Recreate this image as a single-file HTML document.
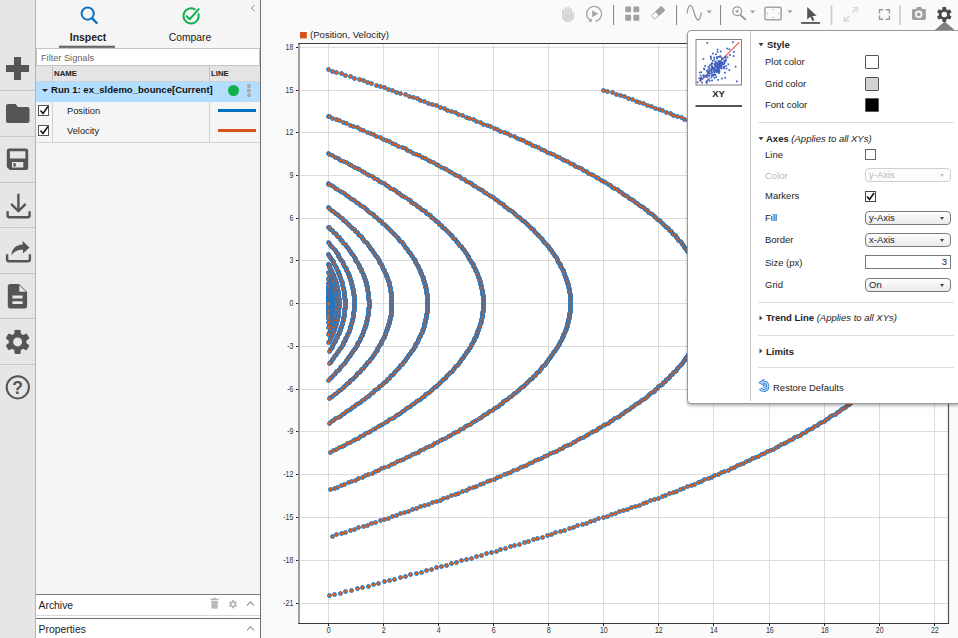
<!DOCTYPE html>
<html><head><meta charset="utf-8"><title>Simulation Data Inspector</title>
<style>
*{box-sizing:border-box;margin:0;padding:0}
html,body{width:958px;height:638px;overflow:hidden;background:#fafafa;font-family:"Liberation Sans",Arial,sans-serif;color:#1a1a1a}
.abs{position:absolute}
#strip{left:0;top:0;width:35px;height:638px;background:#e6e6e6}
#stripb{left:35px;top:0;width:1px;height:638px;background:#b4b4b4}
.sep{left:0;width:35px;height:1px;background:#c8c8c8}
#panel{left:36px;top:0;width:224px;height:638px;background:#f5f5f5}
#panelb{left:260px;top:0;width:1px;height:638px;background:#6e6e6e}
#gap{left:261px;top:0;width:3px;height:638px;background:linear-gradient(90deg,#fff 0,#fff 33%,#f5f5f5 33%,#f7f7f7 100%)}
.tab{font-size:10.4px;text-align:center;width:80px;top:32.2px;line-height:12px;color:#222}
#filter{left:36px;top:48px;width:224px;height:18px;background:#fff;border:1px solid #c4c4c4;font-size:9.2px;color:#666;padding-left:4px;line-height:18.6px}
#thead{left:36px;top:66px;width:224px;height:16px;background:#e4e4e4;border-bottom:1px solid #cbd3da;font-size:7.8px;font-weight:bold;color:#222;line-height:16px}
#run{left:36px;top:82px;width:224px;height:20px;background:#b3deff;font-size:9.55px;font-weight:bold;line-height:16px;color:#111}
.row{left:36px;width:224px;height:20px;background:#f5f5f5;font-size:9.3px;line-height:19px;color:#222}
.cb{width:11px;height:11px;border:1px solid #555;background:#fff}
.vline{width:1px;background:#d0d0d0}
#archive,#props{left:38.5px;font-size:10.4px;line-height:12px;color:#222;white-space:nowrap}
#pop{left:687px;top:30px;width:274px;height:374px;background:#fff;border:1px solid #999;border-radius:4px;box-shadow:0 2px 3px rgba(0,0,0,.28)}
.lbl{font-size:9.5px;color:#222;left:765px;line-height:12px;white-space:nowrap}
.hd{font-size:9.5px;color:#222;left:766px;line-height:12px;white-space:nowrap}
.hline{left:758px;width:196px;height:1px;background:#dcdcdc}
.sw{left:865px;width:14px;height:14px;border:1px solid #555;border-radius:1px}
.sel{left:865px;width:86px;height:14px;border:1px solid #7a7a7a;border-radius:4px;background:linear-gradient(#fff,#e9e9e9);font-size:9.5px;line-height:11px;padding-left:3px;color:#222}
.tri{width:0;height:0;border-left:3.5px solid transparent;border-right:3.5px solid transparent;border-top:4px solid #555}
.tri2{width:0;height:0;border-left:2.6px solid transparent;border-right:2.6px solid transparent;border-top:3px solid #444}
svg{position:absolute;left:0;top:0}
</style></head><body>
<!-- PLOT -->
<svg width="958" height="638" viewBox="0 0 958 638">
<rect x="298.5" y="43.5" width="650" height="580" fill="#fff"/>
<g stroke="#dcdcdc" stroke-width="1" shape-rendering="crispEdges">
<path d="M328.5 44V623"/>
<path d="M383.5 44V623"/>
<path d="M438.5 44V623"/>
<path d="M493.5 44V623"/>
<path d="M548.5 44V623"/>
<path d="M603.5 44V623"/>
<path d="M658.5 44V623"/>
<path d="M713.5 44V623"/>
<path d="M769.5 44V623"/>
<path d="M824.5 44V623"/>
<path d="M879.5 44V623"/>
<path d="M934.5 44V623"/>
<path d="M299 603.5H948"/>
<path d="M299 560.5H948"/>
<path d="M299 517.5H948"/>
<path d="M299 474.5H948"/>
<path d="M299 431.5H948"/>
<path d="M299 389.5H948"/>
<path d="M299 346.5H948"/>
<path d="M299 303.5H948"/>
<path d="M299 260.5H948"/>
<path d="M299 218.5H948"/>
<path d="M299 175.5H948"/>
<path d="M299 132.5H948"/>
<path d="M299 90.5H948"/>
<path d="M299 47.5H948"/>
</g>
<path d="M299 43V624" stroke="#777" stroke-width="1.4"/><path d="M948.5 43V624" stroke="#555" stroke-width="1.2"/><path d="M298.300 43.500H949M298.300 623.500H949" stroke="#3a3a3a" stroke-width="1.1"/>
<g stroke="#222" stroke-width="1" shape-rendering="crispEdges">
<path d="M328.5 624v2"/>
<path d="M383.5 624v2"/>
<path d="M438.5 624v2"/>
<path d="M493.5 624v2"/>
<path d="M548.5 624v2"/>
<path d="M603.5 624v2"/>
<path d="M658.5 624v2"/>
<path d="M713.5 624v2"/>
<path d="M769.5 624v2"/>
<path d="M824.5 624v2"/>
<path d="M879.5 624v2"/>
<path d="M934.5 624v2"/>
<path d="M296.300 603.5h2"/>
<path d="M296.300 560.5h2"/>
<path d="M296.300 517.5h2"/>
<path d="M296.300 474.5h2"/>
<path d="M296.300 431.5h2"/>
<path d="M296.300 389.5h2"/>
<path d="M296.300 346.5h2"/>
<path d="M296.300 303.5h2"/>
<path d="M296.300 260.5h2"/>
<path d="M296.300 218.5h2"/>
<path d="M296.300 175.5h2"/>
<path d="M296.300 132.5h2"/>
<path d="M296.300 90.5h2"/>
<path d="M296.300 47.5h2"/>
</g>
<g font-family="Liberation Sans, Arial, sans-serif" font-size="8.2" fill="#333" transform="scale(.86 1)">
<text x="382.33" y="633.200" text-anchor="middle">0</text>
<text x="446.28" y="633.200" text-anchor="middle">2</text>
<text x="510.23" y="633.200" text-anchor="middle">4</text>
<text x="574.19" y="633.200" text-anchor="middle">6</text>
<text x="638.14" y="633.200" text-anchor="middle">8</text>
<text x="702.09" y="633.200" text-anchor="middle">10</text>
<text x="766.05" y="633.200" text-anchor="middle">12</text>
<text x="830.00" y="633.200" text-anchor="middle">14</text>
<text x="895.12" y="633.200" text-anchor="middle">16</text>
<text x="959.07" y="633.200" text-anchor="middle">18</text>
<text x="1023.02" y="633.200" text-anchor="middle">20</text>
<text x="1086.98" y="633.200" text-anchor="middle">22</text>
<text x="341.16" y="606.0" text-anchor="end">-21</text>
<text x="341.16" y="563.0" text-anchor="end">-18</text>
<text x="341.16" y="520.0" text-anchor="end">-15</text>
<text x="341.16" y="477.0" text-anchor="end">-12</text>
<text x="341.16" y="434.0" text-anchor="end">-9</text>
<text x="341.16" y="392.0" text-anchor="end">-6</text>
<text x="341.16" y="349.0" text-anchor="end">-3</text>
<text x="341.16" y="306.0" text-anchor="end">0</text>
<text x="341.16" y="263.0" text-anchor="end">3</text>
<text x="341.16" y="221.0" text-anchor="end">6</text>
<text x="341.16" y="178.0" text-anchor="end">9</text>
<text x="341.16" y="135.0" text-anchor="end">12</text>
<text x="341.16" y="93.0" text-anchor="end">15</text>
<text x="341.16" y="50.0" text-anchor="end">18</text>
</g>
<rect x="300" y="32" width="6.800" height="6.400" fill="#d95319"/>
<text x="310" y="37.600" font-family="Liberation Sans, Arial, sans-serif" font-size="9.6" fill="#222">(Position, Velocity)</text>
<g fill="#ee5a0c" stroke="#0a78d6" stroke-width="0.9">
<circle cx="603.5" cy="90.5" r="2"/>
<circle cx="607.5" cy="91.5" r="2"/>
<circle cx="612.5" cy="92.5" r="2"/>
<circle cx="616.5" cy="94.5" r="2"/>
<circle cx="620.5" cy="95.5" r="2"/>
<circle cx="624.5" cy="96.5" r="2"/>
<circle cx="628.5" cy="98.5" r="2"/>
<circle cx="632.5" cy="99.5" r="2"/>
<circle cx="636.5" cy="101.5" r="2"/>
<circle cx="639.5" cy="102.5" r="2"/>
<circle cx="643.5" cy="103.5" r="2"/>
<circle cx="647.5" cy="105.5" r="2"/>
<circle cx="651.5" cy="106.5" r="2"/>
<circle cx="655.5" cy="108.5" r="2"/>
<circle cx="659.5" cy="109.5" r="2"/>
<circle cx="662.5" cy="110.5" r="2"/>
<circle cx="666.5" cy="112.5" r="2"/>
<circle cx="670.5" cy="113.5" r="2"/>
<circle cx="673.5" cy="115.5" r="2"/>
<circle cx="677.5" cy="116.5" r="2"/>
<circle cx="681.5" cy="117.5" r="2"/>
<circle cx="684.5" cy="119.5" r="2"/>
<circle cx="688.5" cy="120.5" r="2"/>
<circle cx="691.5" cy="122.5" r="2"/>
<circle cx="695.5" cy="123.5" r="2"/>
<circle cx="698.5" cy="124.5" r="2"/>
<circle cx="702.5" cy="126.5" r="2"/>
<circle cx="705.5" cy="127.5" r="2"/>
<circle cx="708.5" cy="129.5" r="2"/>
<circle cx="712.5" cy="130.5" r="2"/>
<circle cx="715.5" cy="131.5" r="2"/>
<circle cx="718.5" cy="133.5" r="2"/>
<circle cx="722.5" cy="134.5" r="2"/>
<circle cx="725.5" cy="136.5" r="2"/>
<circle cx="728.5" cy="137.5" r="2"/>
<circle cx="731.5" cy="138.5" r="2"/>
<circle cx="735.5" cy="140.5" r="2"/>
<circle cx="738.5" cy="141.5" r="2"/>
<circle cx="741.5" cy="143.5" r="2"/>
<circle cx="744.5" cy="144.5" r="2"/>
<circle cx="747.5" cy="145.5" r="2"/>
<circle cx="750.5" cy="147.5" r="2"/>
<circle cx="753.5" cy="148.5" r="2"/>
<circle cx="756.5" cy="150.5" r="2"/>
<circle cx="759.5" cy="151.5" r="2"/>
<circle cx="762.5" cy="152.5" r="2"/>
<circle cx="765.5" cy="154.5" r="2"/>
<circle cx="768.5" cy="155.5" r="2"/>
<circle cx="770.5" cy="157.5" r="2"/>
<circle cx="773.5" cy="158.5" r="2"/>
<circle cx="776.5" cy="159.5" r="2"/>
<circle cx="779.5" cy="161.5" r="2"/>
<circle cx="782.5" cy="162.5" r="2"/>
<circle cx="784.5" cy="164.5" r="2"/>
<circle cx="787.5" cy="165.5" r="2"/>
<circle cx="790.5" cy="166.5" r="2"/>
<circle cx="792.5" cy="168.5" r="2"/>
<circle cx="795.5" cy="169.5" r="2"/>
<circle cx="797.5" cy="171.5" r="2"/>
<circle cx="800.5" cy="172.5" r="2"/>
<circle cx="803.5" cy="173.5" r="2"/>
<circle cx="805.5" cy="175.5" r="2"/>
<circle cx="808.5" cy="176.5" r="2"/>
<circle cx="810.5" cy="178.5" r="2"/>
<circle cx="812.5" cy="179.5" r="2"/>
<circle cx="815.5" cy="180.5" r="2"/>
<circle cx="817.5" cy="182.5" r="2"/>
<circle cx="819.5" cy="183.5" r="2"/>
<circle cx="822.5" cy="185.5" r="2"/>
<circle cx="824.5" cy="186.5" r="2"/>
<circle cx="826.5" cy="187.5" r="2"/>
<circle cx="829.5" cy="189.5" r="2"/>
<circle cx="831.5" cy="190.5" r="2"/>
<circle cx="833.5" cy="192.5" r="2"/>
<circle cx="835.5" cy="193.5" r="2"/>
<circle cx="837.5" cy="194.5" r="2"/>
<circle cx="839.5" cy="196.5" r="2"/>
<circle cx="841.5" cy="197.5" r="2"/>
<circle cx="843.5" cy="198.5" r="2"/>
<circle cx="845.5" cy="200.5" r="2"/>
<circle cx="847.5" cy="201.5" r="2"/>
<circle cx="849.5" cy="203.5" r="2"/>
<circle cx="851.5" cy="204.5" r="2"/>
<circle cx="853.5" cy="205.5" r="2"/>
<circle cx="855.5" cy="207.5" r="2"/>
<circle cx="857.5" cy="208.5" r="2"/>
<circle cx="859.5" cy="210.5" r="2"/>
<circle cx="860.5" cy="211.5" r="2"/>
<circle cx="862.5" cy="212.5" r="2"/>
<circle cx="864.5" cy="214.5" r="2"/>
<circle cx="866.5" cy="215.5" r="2"/>
<circle cx="867.5" cy="217.5" r="2"/>
<circle cx="869.5" cy="218.5" r="2"/>
<circle cx="871.5" cy="219.5" r="2"/>
<circle cx="872.5" cy="221.5" r="2"/>
<circle cx="874.5" cy="222.5" r="2"/>
<circle cx="875.5" cy="224.5" r="2"/>
<circle cx="877.5" cy="225.5" r="2"/>
<circle cx="878.5" cy="226.5" r="2"/>
<circle cx="880.5" cy="228.5" r="2"/>
<circle cx="881.5" cy="229.5" r="2"/>
<circle cx="883.5" cy="231.5" r="2"/>
<circle cx="884.5" cy="232.5" r="2"/>
<circle cx="885.5" cy="233.5" r="2"/>
<circle cx="887.5" cy="235.5" r="2"/>
<circle cx="888.5" cy="236.5" r="2"/>
<circle cx="889.5" cy="238.5" r="2"/>
<circle cx="891.5" cy="239.5" r="2"/>
<circle cx="892.5" cy="240.5" r="2"/>
<circle cx="893.5" cy="242.5" r="2"/>
<circle cx="894.5" cy="243.5" r="2"/>
<circle cx="895.5" cy="245.5" r="2"/>
<circle cx="897.5" cy="246.5" r="2"/>
<circle cx="898.5" cy="247.5" r="2"/>
<circle cx="899.5" cy="249.5" r="2"/>
<circle cx="900.5" cy="250.5" r="2"/>
<circle cx="901.5" cy="252.5" r="2"/>
<circle cx="902.5" cy="253.5" r="2"/>
<circle cx="903.5" cy="254.5" r="2"/>
<circle cx="904.5" cy="256.5" r="2"/>
<circle cx="904.5" cy="257.5" r="2"/>
<circle cx="905.5" cy="259.5" r="2"/>
<circle cx="906.5" cy="260.5" r="2"/>
<circle cx="907.5" cy="261.5" r="2"/>
<circle cx="908.5" cy="263.5" r="2"/>
<circle cx="909.5" cy="264.5" r="2"/>
<circle cx="909.5" cy="266.5" r="2"/>
<circle cx="910.5" cy="267.5" r="2"/>
<circle cx="911.5" cy="268.5" r="2"/>
<circle cx="911.5" cy="270.5" r="2"/>
<circle cx="912.5" cy="271.5" r="2"/>
<circle cx="913.5" cy="273.5" r="2"/>
<circle cx="913.5" cy="274.5" r="2"/>
<circle cx="914.5" cy="275.5" r="2"/>
<circle cx="914.5" cy="277.5" r="2"/>
<circle cx="915.5" cy="278.5" r="2"/>
<circle cx="915.5" cy="280.5" r="2"/>
<circle cx="916.5" cy="281.5" r="2"/>
<circle cx="916.5" cy="282.5" r="2"/>
<circle cx="917.5" cy="284.5" r="2"/>
<circle cx="917.5" cy="285.5" r="2"/>
<circle cx="917.5" cy="287.5" r="2"/>
<circle cx="918.5" cy="288.5" r="2"/>
<circle cx="918.5" cy="289.5" r="2"/>
<circle cx="918.5" cy="291.5" r="2"/>
<circle cx="918.5" cy="292.5" r="2"/>
<circle cx="918.5" cy="294.5" r="2"/>
<circle cx="919.5" cy="295.5" r="2"/>
<circle cx="919.5" cy="296.5" r="2"/>
<circle cx="919.5" cy="298.5" r="2"/>
<circle cx="919.5" cy="299.5" r="2"/>
<circle cx="919.5" cy="300.5" r="2"/>
<circle cx="919.5" cy="302.5" r="2"/>
<circle cx="919.5" cy="303.5" r="2"/>
<circle cx="919.5" cy="305.5" r="2"/>
<circle cx="919.5" cy="306.5" r="2"/>
<circle cx="919.5" cy="307.5" r="2"/>
<circle cx="919.5" cy="309.5" r="2"/>
<circle cx="919.5" cy="310.5" r="2"/>
<circle cx="919.5" cy="312.5" r="2"/>
<circle cx="918.5" cy="313.5" r="2"/>
<circle cx="918.5" cy="314.5" r="2"/>
<circle cx="918.5" cy="316.5" r="2"/>
<circle cx="918.5" cy="317.5" r="2"/>
<circle cx="917.5" cy="319.5" r="2"/>
<circle cx="917.5" cy="320.5" r="2"/>
<circle cx="917.5" cy="321.5" r="2"/>
<circle cx="916.5" cy="323.5" r="2"/>
<circle cx="916.5" cy="324.5" r="2"/>
<circle cx="916.5" cy="326.5" r="2"/>
<circle cx="915.5" cy="327.5" r="2"/>
<circle cx="915.5" cy="328.5" r="2"/>
<circle cx="914.5" cy="330.5" r="2"/>
<circle cx="914.5" cy="331.5" r="2"/>
<circle cx="913.5" cy="333.5" r="2"/>
<circle cx="913.5" cy="334.5" r="2"/>
<circle cx="912.5" cy="335.5" r="2"/>
<circle cx="911.5" cy="337.5" r="2"/>
<circle cx="911.5" cy="338.5" r="2"/>
<circle cx="910.5" cy="340.5" r="2"/>
<circle cx="909.5" cy="341.5" r="2"/>
<circle cx="908.5" cy="342.5" r="2"/>
<circle cx="908.5" cy="344.5" r="2"/>
<circle cx="907.5" cy="345.5" r="2"/>
<circle cx="906.5" cy="347.5" r="2"/>
<circle cx="905.5" cy="348.5" r="2"/>
<circle cx="904.5" cy="349.5" r="2"/>
<circle cx="903.5" cy="351.5" r="2"/>
<circle cx="902.5" cy="352.5" r="2"/>
<circle cx="902.5" cy="354.5" r="2"/>
<circle cx="901.5" cy="355.5" r="2"/>
<circle cx="900.5" cy="356.5" r="2"/>
<circle cx="898.5" cy="358.5" r="2"/>
<circle cx="897.5" cy="359.5" r="2"/>
<circle cx="896.5" cy="361.5" r="2"/>
<circle cx="895.5" cy="362.5" r="2"/>
<circle cx="894.5" cy="363.5" r="2"/>
<circle cx="893.5" cy="365.5" r="2"/>
<circle cx="892.5" cy="366.5" r="2"/>
<circle cx="890.5" cy="368.5" r="2"/>
<circle cx="889.5" cy="369.5" r="2"/>
<circle cx="888.5" cy="370.5" r="2"/>
<circle cx="887.5" cy="372.5" r="2"/>
<circle cx="885.5" cy="373.5" r="2"/>
<circle cx="884.5" cy="375.5" r="2"/>
<circle cx="882.5" cy="376.5" r="2"/>
<circle cx="881.5" cy="377.5" r="2"/>
<circle cx="880.5" cy="379.5" r="2"/>
<circle cx="878.5" cy="380.5" r="2"/>
<circle cx="877.5" cy="382.5" r="2"/>
<circle cx="875.5" cy="383.5" r="2"/>
<circle cx="874.5" cy="384.5" r="2"/>
<circle cx="872.5" cy="386.5" r="2"/>
<circle cx="870.5" cy="387.5" r="2"/>
<circle cx="869.5" cy="389.5" r="2"/>
<circle cx="867.5" cy="390.5" r="2"/>
<circle cx="865.5" cy="391.5" r="2"/>
<circle cx="864.5" cy="393.5" r="2"/>
<circle cx="862.5" cy="394.5" r="2"/>
<circle cx="860.5" cy="396.5" r="2"/>
<circle cx="858.5" cy="397.5" r="2"/>
<circle cx="856.5" cy="398.5" r="2"/>
<circle cx="855.5" cy="400.5" r="2"/>
<circle cx="853.5" cy="401.5" r="2"/>
<circle cx="851.5" cy="402.5" r="2"/>
<circle cx="849.5" cy="404.5" r="2"/>
<circle cx="847.5" cy="405.5" r="2"/>
<circle cx="845.5" cy="407.5" r="2"/>
<circle cx="843.5" cy="408.5" r="2"/>
<circle cx="841.5" cy="409.5" r="2"/>
<circle cx="839.5" cy="411.5" r="2"/>
<circle cx="837.5" cy="412.5" r="2"/>
<circle cx="835.5" cy="414.5" r="2"/>
<circle cx="832.5" cy="415.5" r="2"/>
<circle cx="830.5" cy="416.5" r="2"/>
<circle cx="828.5" cy="418.5" r="2"/>
<circle cx="826.5" cy="419.5" r="2"/>
<circle cx="824.5" cy="421.5" r="2"/>
<circle cx="821.5" cy="422.5" r="2"/>
<circle cx="819.5" cy="423.5" r="2"/>
<circle cx="817.5" cy="425.5" r="2"/>
<circle cx="814.5" cy="426.5" r="2"/>
<circle cx="812.5" cy="428.5" r="2"/>
<circle cx="809.5" cy="429.5" r="2"/>
<circle cx="807.5" cy="430.5" r="2"/>
<circle cx="805.5" cy="432.5" r="2"/>
<circle cx="802.5" cy="433.5" r="2"/>
<circle cx="800.5" cy="435.5" r="2"/>
<circle cx="797.5" cy="436.5" r="2"/>
<circle cx="794.5" cy="437.5" r="2"/>
<circle cx="792.5" cy="439.5" r="2"/>
<circle cx="789.5" cy="440.5" r="2"/>
<circle cx="786.5" cy="442.5" r="2"/>
<circle cx="784.5" cy="443.5" r="2"/>
<circle cx="781.5" cy="444.5" r="2"/>
<circle cx="778.5" cy="446.5" r="2"/>
<circle cx="776.5" cy="447.5" r="2"/>
<circle cx="773.5" cy="449.5" r="2"/>
<circle cx="770.5" cy="450.5" r="2"/>
<circle cx="767.5" cy="451.5" r="2"/>
<circle cx="764.5" cy="453.5" r="2"/>
<circle cx="761.5" cy="454.5" r="2"/>
<circle cx="758.5" cy="456.5" r="2"/>
<circle cx="755.5" cy="457.5" r="2"/>
<circle cx="752.5" cy="458.5" r="2"/>
<circle cx="749.5" cy="460.5" r="2"/>
<circle cx="746.5" cy="461.5" r="2"/>
<circle cx="743.5" cy="463.5" r="2"/>
<circle cx="740.5" cy="464.5" r="2"/>
<circle cx="737.5" cy="465.5" r="2"/>
<circle cx="734.5" cy="467.5" r="2"/>
<circle cx="731.5" cy="468.5" r="2"/>
<circle cx="728.5" cy="470.5" r="2"/>
<circle cx="724.5" cy="471.5" r="2"/>
<circle cx="721.5" cy="472.5" r="2"/>
<circle cx="718.5" cy="474.5" r="2"/>
<circle cx="714.5" cy="475.5" r="2"/>
<circle cx="711.5" cy="477.5" r="2"/>
<circle cx="708.5" cy="478.5" r="2"/>
<circle cx="704.5" cy="479.5" r="2"/>
<circle cx="701.5" cy="481.5" r="2"/>
<circle cx="698.5" cy="482.5" r="2"/>
<circle cx="694.5" cy="484.5" r="2"/>
<circle cx="691.5" cy="485.5" r="2"/>
<circle cx="687.5" cy="486.5" r="2"/>
<circle cx="683.5" cy="488.5" r="2"/>
<circle cx="680.5" cy="489.5" r="2"/>
<circle cx="676.5" cy="491.5" r="2"/>
<circle cx="673.5" cy="492.5" r="2"/>
<circle cx="669.5" cy="493.5" r="2"/>
<circle cx="665.5" cy="495.5" r="2"/>
<circle cx="662.5" cy="496.5" r="2"/>
<circle cx="658.5" cy="498.5" r="2"/>
<circle cx="654.5" cy="499.5" r="2"/>
<circle cx="650.5" cy="500.5" r="2"/>
<circle cx="646.5" cy="502.5" r="2"/>
<circle cx="643.5" cy="503.5" r="2"/>
<circle cx="639.5" cy="505.5" r="2"/>
<circle cx="635.5" cy="506.5" r="2"/>
<circle cx="631.5" cy="507.5" r="2"/>
<circle cx="627.5" cy="509.5" r="2"/>
<circle cx="623.5" cy="510.5" r="2"/>
<circle cx="619.5" cy="511.5" r="2"/>
<circle cx="615.5" cy="513.5" r="2"/>
<circle cx="611.5" cy="514.5" r="2"/>
<circle cx="607.5" cy="516.5" r="2"/>
<circle cx="603.5" cy="517.5" r="2"/>
<circle cx="598.5" cy="518.5" r="2"/>
<circle cx="594.5" cy="520.5" r="2"/>
<circle cx="590.5" cy="521.5" r="2"/>
<circle cx="586.5" cy="523.5" r="2"/>
<circle cx="582.5" cy="524.5" r="2"/>
<circle cx="577.5" cy="525.5" r="2"/>
<circle cx="573.5" cy="527.5" r="2"/>
<circle cx="569.5" cy="528.5" r="2"/>
<circle cx="564.5" cy="530.5" r="2"/>
<circle cx="560.5" cy="531.5" r="2"/>
<circle cx="555.5" cy="532.5" r="2"/>
<circle cx="551.5" cy="534.5" r="2"/>
<circle cx="547.5" cy="535.5" r="2"/>
<circle cx="542.5" cy="537.5" r="2"/>
<circle cx="537.5" cy="538.5" r="2"/>
<circle cx="533.5" cy="539.5" r="2"/>
<circle cx="528.5" cy="541.5" r="2"/>
<circle cx="524.5" cy="542.5" r="2"/>
<circle cx="519.5" cy="544.5" r="2"/>
<circle cx="514.5" cy="545.5" r="2"/>
<circle cx="510.5" cy="546.5" r="2"/>
<circle cx="505.5" cy="548.5" r="2"/>
<circle cx="500.5" cy="549.5" r="2"/>
<circle cx="496.5" cy="551.5" r="2"/>
<circle cx="491.5" cy="552.5" r="2"/>
<circle cx="486.5" cy="553.5" r="2"/>
<circle cx="481.5" cy="555.5" r="2"/>
<circle cx="476.5" cy="556.5" r="2"/>
<circle cx="471.5" cy="558.5" r="2"/>
<circle cx="466.5" cy="559.5" r="2"/>
<circle cx="461.5" cy="560.5" r="2"/>
<circle cx="456.5" cy="562.5" r="2"/>
<circle cx="451.5" cy="563.5" r="2"/>
<circle cx="446.5" cy="565.5" r="2"/>
<circle cx="441.5" cy="566.5" r="2"/>
<circle cx="436.5" cy="567.5" r="2"/>
<circle cx="431.5" cy="569.5" r="2"/>
<circle cx="426.5" cy="570.5" r="2"/>
<circle cx="421.5" cy="572.5" r="2"/>
<circle cx="416.5" cy="573.5" r="2"/>
<circle cx="410.5" cy="574.5" r="2"/>
<circle cx="405.5" cy="576.5" r="2"/>
<circle cx="400.5" cy="577.5" r="2"/>
<circle cx="394.5" cy="579.5" r="2"/>
<circle cx="389.5" cy="580.5" r="2"/>
<circle cx="384.5" cy="581.5" r="2"/>
<circle cx="378.5" cy="583.5" r="2"/>
<circle cx="373.5" cy="584.5" r="2"/>
<circle cx="368.5" cy="586.5" r="2"/>
<circle cx="362.5" cy="587.5" r="2"/>
<circle cx="357.5" cy="588.5" r="2"/>
<circle cx="351.5" cy="590.5" r="2"/>
<circle cx="345.5" cy="591.5" r="2"/>
<circle cx="340.5" cy="593.5" r="2"/>
<circle cx="334.5" cy="594.5" r="2"/>
<circle cx="329.5" cy="595.5" r="2"/>
<circle cx="328.5" cy="69.5" r="2"/>
<circle cx="332.5" cy="71.5" r="2"/>
<circle cx="336.5" cy="72.5" r="2"/>
<circle cx="341.5" cy="73.5" r="2"/>
<circle cx="345.5" cy="75.5" r="2"/>
<circle cx="350.5" cy="76.5" r="2"/>
<circle cx="354.5" cy="78.5" r="2"/>
<circle cx="359.5" cy="79.5" r="2"/>
<circle cx="363.5" cy="80.5" r="2"/>
<circle cx="367.5" cy="82.5" r="2"/>
<circle cx="371.5" cy="83.5" r="2"/>
<circle cx="376.5" cy="85.5" r="2"/>
<circle cx="380.5" cy="86.5" r="2"/>
<circle cx="384.5" cy="87.5" r="2"/>
<circle cx="388.5" cy="89.5" r="2"/>
<circle cx="392.5" cy="90.5" r="2"/>
<circle cx="396.5" cy="92.5" r="2"/>
<circle cx="400.5" cy="93.5" r="2"/>
<circle cx="405.5" cy="94.5" r="2"/>
<circle cx="409.5" cy="96.5" r="2"/>
<circle cx="413.5" cy="97.5" r="2"/>
<circle cx="417.5" cy="98.5" r="2"/>
<circle cx="420.5" cy="100.5" r="2"/>
<circle cx="424.5" cy="101.5" r="2"/>
<circle cx="428.5" cy="103.5" r="2"/>
<circle cx="432.5" cy="104.5" r="2"/>
<circle cx="436.5" cy="105.5" r="2"/>
<circle cx="440.5" cy="107.5" r="2"/>
<circle cx="444.5" cy="108.5" r="2"/>
<circle cx="447.5" cy="110.5" r="2"/>
<circle cx="451.5" cy="111.5" r="2"/>
<circle cx="455.5" cy="112.5" r="2"/>
<circle cx="458.5" cy="114.5" r="2"/>
<circle cx="462.5" cy="115.5" r="2"/>
<circle cx="466.5" cy="117.5" r="2"/>
<circle cx="469.5" cy="118.5" r="2"/>
<circle cx="473.5" cy="119.5" r="2"/>
<circle cx="476.5" cy="121.5" r="2"/>
<circle cx="480.5" cy="122.5" r="2"/>
<circle cx="483.5" cy="124.5" r="2"/>
<circle cx="487.5" cy="125.5" r="2"/>
<circle cx="490.5" cy="126.5" r="2"/>
<circle cx="494.5" cy="128.5" r="2"/>
<circle cx="497.5" cy="129.5" r="2"/>
<circle cx="500.5" cy="131.5" r="2"/>
<circle cx="504.5" cy="132.5" r="2"/>
<circle cx="507.5" cy="133.5" r="2"/>
<circle cx="510.5" cy="135.5" r="2"/>
<circle cx="514.5" cy="136.5" r="2"/>
<circle cx="517.5" cy="138.5" r="2"/>
<circle cx="520.5" cy="139.5" r="2"/>
<circle cx="523.5" cy="140.5" r="2"/>
<circle cx="526.5" cy="142.5" r="2"/>
<circle cx="529.5" cy="143.5" r="2"/>
<circle cx="532.5" cy="145.5" r="2"/>
<circle cx="535.5" cy="146.5" r="2"/>
<circle cx="538.5" cy="147.5" r="2"/>
<circle cx="541.5" cy="149.5" r="2"/>
<circle cx="544.5" cy="150.5" r="2"/>
<circle cx="547.5" cy="152.5" r="2"/>
<circle cx="550.5" cy="153.5" r="2"/>
<circle cx="553.5" cy="154.5" r="2"/>
<circle cx="556.5" cy="156.5" r="2"/>
<circle cx="559.5" cy="157.5" r="2"/>
<circle cx="562.5" cy="159.5" r="2"/>
<circle cx="564.5" cy="160.5" r="2"/>
<circle cx="567.5" cy="161.5" r="2"/>
<circle cx="570.5" cy="163.5" r="2"/>
<circle cx="573.5" cy="164.5" r="2"/>
<circle cx="575.5" cy="166.5" r="2"/>
<circle cx="578.5" cy="167.5" r="2"/>
<circle cx="581.5" cy="168.5" r="2"/>
<circle cx="583.5" cy="170.5" r="2"/>
<circle cx="586.5" cy="171.5" r="2"/>
<circle cx="588.5" cy="173.5" r="2"/>
<circle cx="591.5" cy="174.5" r="2"/>
<circle cx="593.5" cy="175.5" r="2"/>
<circle cx="596.5" cy="177.5" r="2"/>
<circle cx="598.5" cy="178.5" r="2"/>
<circle cx="601.5" cy="180.5" r="2"/>
<circle cx="603.5" cy="181.5" r="2"/>
<circle cx="605.5" cy="182.5" r="2"/>
<circle cx="608.5" cy="184.5" r="2"/>
<circle cx="610.5" cy="185.5" r="2"/>
<circle cx="612.5" cy="187.5" r="2"/>
<circle cx="614.5" cy="188.5" r="2"/>
<circle cx="617.5" cy="189.5" r="2"/>
<circle cx="619.5" cy="191.5" r="2"/>
<circle cx="621.5" cy="192.5" r="2"/>
<circle cx="623.5" cy="194.5" r="2"/>
<circle cx="625.5" cy="195.5" r="2"/>
<circle cx="627.5" cy="196.5" r="2"/>
<circle cx="629.5" cy="198.5" r="2"/>
<circle cx="631.5" cy="199.5" r="2"/>
<circle cx="633.5" cy="200.5" r="2"/>
<circle cx="635.5" cy="202.5" r="2"/>
<circle cx="637.5" cy="203.5" r="2"/>
<circle cx="639.5" cy="205.5" r="2"/>
<circle cx="641.5" cy="206.5" r="2"/>
<circle cx="643.5" cy="207.5" r="2"/>
<circle cx="645.5" cy="209.5" r="2"/>
<circle cx="647.5" cy="210.5" r="2"/>
<circle cx="648.5" cy="212.5" r="2"/>
<circle cx="650.5" cy="213.5" r="2"/>
<circle cx="652.5" cy="214.5" r="2"/>
<circle cx="654.5" cy="216.5" r="2"/>
<circle cx="655.5" cy="217.5" r="2"/>
<circle cx="657.5" cy="219.5" r="2"/>
<circle cx="659.5" cy="220.5" r="2"/>
<circle cx="660.5" cy="221.5" r="2"/>
<circle cx="662.5" cy="223.5" r="2"/>
<circle cx="663.5" cy="224.5" r="2"/>
<circle cx="665.5" cy="226.5" r="2"/>
<circle cx="666.5" cy="227.5" r="2"/>
<circle cx="668.5" cy="228.5" r="2"/>
<circle cx="669.5" cy="230.5" r="2"/>
<circle cx="671.5" cy="231.5" r="2"/>
<circle cx="672.5" cy="233.5" r="2"/>
<circle cx="673.5" cy="234.5" r="2"/>
<circle cx="675.5" cy="235.5" r="2"/>
<circle cx="676.5" cy="237.5" r="2"/>
<circle cx="677.5" cy="238.5" r="2"/>
<circle cx="678.5" cy="240.5" r="2"/>
<circle cx="680.5" cy="241.5" r="2"/>
<circle cx="681.5" cy="242.5" r="2"/>
<circle cx="682.5" cy="244.5" r="2"/>
<circle cx="683.5" cy="245.5" r="2"/>
<circle cx="684.5" cy="247.5" r="2"/>
<circle cx="685.5" cy="248.5" r="2"/>
<circle cx="686.5" cy="249.5" r="2"/>
<circle cx="687.5" cy="251.5" r="2"/>
<circle cx="688.5" cy="252.5" r="2"/>
<circle cx="689.5" cy="254.5" r="2"/>
<circle cx="690.5" cy="255.5" r="2"/>
<circle cx="691.5" cy="256.5" r="2"/>
<circle cx="692.5" cy="258.5" r="2"/>
<circle cx="693.5" cy="259.5" r="2"/>
<circle cx="694.5" cy="261.5" r="2"/>
<circle cx="695.5" cy="262.5" r="2"/>
<circle cx="695.5" cy="263.5" r="2"/>
<circle cx="696.5" cy="265.5" r="2"/>
<circle cx="697.5" cy="266.5" r="2"/>
<circle cx="698.5" cy="268.5" r="2"/>
<circle cx="698.5" cy="269.5" r="2"/>
<circle cx="699.5" cy="270.5" r="2"/>
<circle cx="699.5" cy="272.5" r="2"/>
<circle cx="700.5" cy="273.5" r="2"/>
<circle cx="701.5" cy="275.5" r="2"/>
<circle cx="701.5" cy="276.5" r="2"/>
<circle cx="702.5" cy="277.5" r="2"/>
<circle cx="702.5" cy="279.5" r="2"/>
<circle cx="703.5" cy="280.5" r="2"/>
<circle cx="703.5" cy="282.5" r="2"/>
<circle cx="703.5" cy="283.5" r="2"/>
<circle cx="704.5" cy="284.5" r="2"/>
<circle cx="704.5" cy="286.5" r="2"/>
<circle cx="705.5" cy="287.5" r="2"/>
<circle cx="705.5" cy="289.5" r="2"/>
<circle cx="705.5" cy="290.5" r="2"/>
<circle cx="705.5" cy="291.5" r="2"/>
<circle cx="706.5" cy="293.5" r="2"/>
<circle cx="706.5" cy="294.5" r="2"/>
<circle cx="706.5" cy="296.5" r="2"/>
<circle cx="706.5" cy="297.5" r="2"/>
<circle cx="706.5" cy="298.5" r="2"/>
<circle cx="706.5" cy="300.5" r="2"/>
<circle cx="706.5" cy="301.5" r="2"/>
<circle cx="706.5" cy="302.5" r="2"/>
<circle cx="706.5" cy="304.5" r="2"/>
<circle cx="706.5" cy="305.5" r="2"/>
<circle cx="706.5" cy="307.5" r="2"/>
<circle cx="706.5" cy="308.5" r="2"/>
<circle cx="706.5" cy="309.5" r="2"/>
<circle cx="706.5" cy="311.5" r="2"/>
<circle cx="706.5" cy="312.5" r="2"/>
<circle cx="706.5" cy="314.5" r="2"/>
<circle cx="705.5" cy="315.5" r="2"/>
<circle cx="705.5" cy="316.5" r="2"/>
<circle cx="705.5" cy="318.5" r="2"/>
<circle cx="705.5" cy="319.5" r="2"/>
<circle cx="704.5" cy="321.5" r="2"/>
<circle cx="704.5" cy="322.5" r="2"/>
<circle cx="703.5" cy="323.5" r="2"/>
<circle cx="703.5" cy="325.5" r="2"/>
<circle cx="703.5" cy="326.5" r="2"/>
<circle cx="702.5" cy="328.5" r="2"/>
<circle cx="702.5" cy="329.5" r="2"/>
<circle cx="701.5" cy="330.5" r="2"/>
<circle cx="701.5" cy="332.5" r="2"/>
<circle cx="700.5" cy="333.5" r="2"/>
<circle cx="699.5" cy="335.5" r="2"/>
<circle cx="699.5" cy="336.5" r="2"/>
<circle cx="698.5" cy="337.5" r="2"/>
<circle cx="698.5" cy="339.5" r="2"/>
<circle cx="697.5" cy="340.5" r="2"/>
<circle cx="696.5" cy="342.5" r="2"/>
<circle cx="695.5" cy="343.5" r="2"/>
<circle cx="695.5" cy="344.5" r="2"/>
<circle cx="694.5" cy="346.5" r="2"/>
<circle cx="693.5" cy="347.5" r="2"/>
<circle cx="692.5" cy="349.5" r="2"/>
<circle cx="691.5" cy="350.5" r="2"/>
<circle cx="690.5" cy="351.5" r="2"/>
<circle cx="689.5" cy="353.5" r="2"/>
<circle cx="688.5" cy="354.5" r="2"/>
<circle cx="687.5" cy="356.5" r="2"/>
<circle cx="686.5" cy="357.5" r="2"/>
<circle cx="685.5" cy="358.5" r="2"/>
<circle cx="684.5" cy="360.5" r="2"/>
<circle cx="683.5" cy="361.5" r="2"/>
<circle cx="682.5" cy="363.5" r="2"/>
<circle cx="681.5" cy="364.5" r="2"/>
<circle cx="680.5" cy="365.5" r="2"/>
<circle cx="678.5" cy="367.5" r="2"/>
<circle cx="677.5" cy="368.5" r="2"/>
<circle cx="676.5" cy="370.5" r="2"/>
<circle cx="675.5" cy="371.5" r="2"/>
<circle cx="673.5" cy="372.5" r="2"/>
<circle cx="672.5" cy="374.5" r="2"/>
<circle cx="670.5" cy="375.5" r="2"/>
<circle cx="669.5" cy="377.5" r="2"/>
<circle cx="668.5" cy="378.5" r="2"/>
<circle cx="666.5" cy="379.5" r="2"/>
<circle cx="665.5" cy="381.5" r="2"/>
<circle cx="663.5" cy="382.5" r="2"/>
<circle cx="662.5" cy="384.5" r="2"/>
<circle cx="660.5" cy="385.5" r="2"/>
<circle cx="658.5" cy="386.5" r="2"/>
<circle cx="657.5" cy="388.5" r="2"/>
<circle cx="655.5" cy="389.5" r="2"/>
<circle cx="654.5" cy="391.5" r="2"/>
<circle cx="652.5" cy="392.5" r="2"/>
<circle cx="650.5" cy="393.5" r="2"/>
<circle cx="648.5" cy="395.5" r="2"/>
<circle cx="647.5" cy="396.5" r="2"/>
<circle cx="645.5" cy="398.5" r="2"/>
<circle cx="643.5" cy="399.5" r="2"/>
<circle cx="641.5" cy="400.5" r="2"/>
<circle cx="639.5" cy="402.5" r="2"/>
<circle cx="637.5" cy="403.5" r="2"/>
<circle cx="635.5" cy="404.5" r="2"/>
<circle cx="633.5" cy="406.5" r="2"/>
<circle cx="631.5" cy="407.5" r="2"/>
<circle cx="629.5" cy="409.5" r="2"/>
<circle cx="627.5" cy="410.5" r="2"/>
<circle cx="625.5" cy="411.5" r="2"/>
<circle cx="623.5" cy="413.5" r="2"/>
<circle cx="621.5" cy="414.5" r="2"/>
<circle cx="619.5" cy="416.5" r="2"/>
<circle cx="617.5" cy="417.5" r="2"/>
<circle cx="614.5" cy="418.5" r="2"/>
<circle cx="612.5" cy="420.5" r="2"/>
<circle cx="610.5" cy="421.5" r="2"/>
<circle cx="608.5" cy="423.5" r="2"/>
<circle cx="605.5" cy="424.5" r="2"/>
<circle cx="603.5" cy="425.5" r="2"/>
<circle cx="600.5" cy="427.5" r="2"/>
<circle cx="598.5" cy="428.5" r="2"/>
<circle cx="596.5" cy="430.5" r="2"/>
<circle cx="593.5" cy="431.5" r="2"/>
<circle cx="591.5" cy="432.5" r="2"/>
<circle cx="588.5" cy="434.5" r="2"/>
<circle cx="586.5" cy="435.5" r="2"/>
<circle cx="583.5" cy="437.5" r="2"/>
<circle cx="580.5" cy="438.5" r="2"/>
<circle cx="578.5" cy="439.5" r="2"/>
<circle cx="575.5" cy="441.5" r="2"/>
<circle cx="573.5" cy="442.5" r="2"/>
<circle cx="570.5" cy="444.5" r="2"/>
<circle cx="567.5" cy="445.5" r="2"/>
<circle cx="564.5" cy="446.5" r="2"/>
<circle cx="562.5" cy="448.5" r="2"/>
<circle cx="559.5" cy="449.5" r="2"/>
<circle cx="556.5" cy="451.5" r="2"/>
<circle cx="553.5" cy="452.5" r="2"/>
<circle cx="550.5" cy="453.5" r="2"/>
<circle cx="547.5" cy="455.5" r="2"/>
<circle cx="544.5" cy="456.5" r="2"/>
<circle cx="541.5" cy="458.5" r="2"/>
<circle cx="538.5" cy="459.5" r="2"/>
<circle cx="535.5" cy="460.5" r="2"/>
<circle cx="532.5" cy="462.5" r="2"/>
<circle cx="529.5" cy="463.5" r="2"/>
<circle cx="526.5" cy="465.5" r="2"/>
<circle cx="523.5" cy="466.5" r="2"/>
<circle cx="520.5" cy="467.5" r="2"/>
<circle cx="517.5" cy="469.5" r="2"/>
<circle cx="513.5" cy="470.5" r="2"/>
<circle cx="510.5" cy="472.5" r="2"/>
<circle cx="507.5" cy="473.5" r="2"/>
<circle cx="504.5" cy="474.5" r="2"/>
<circle cx="500.5" cy="476.5" r="2"/>
<circle cx="497.5" cy="477.5" r="2"/>
<circle cx="494.5" cy="479.5" r="2"/>
<circle cx="490.5" cy="480.5" r="2"/>
<circle cx="487.5" cy="481.5" r="2"/>
<circle cx="483.5" cy="483.5" r="2"/>
<circle cx="480.5" cy="484.5" r="2"/>
<circle cx="476.5" cy="486.5" r="2"/>
<circle cx="473.5" cy="487.5" r="2"/>
<circle cx="469.5" cy="488.5" r="2"/>
<circle cx="466.5" cy="490.5" r="2"/>
<circle cx="462.5" cy="491.5" r="2"/>
<circle cx="458.5" cy="493.5" r="2"/>
<circle cx="455.5" cy="494.5" r="2"/>
<circle cx="451.5" cy="495.5" r="2"/>
<circle cx="447.5" cy="497.5" r="2"/>
<circle cx="443.5" cy="498.5" r="2"/>
<circle cx="440.5" cy="500.5" r="2"/>
<circle cx="436.5" cy="501.5" r="2"/>
<circle cx="432.5" cy="502.5" r="2"/>
<circle cx="428.5" cy="504.5" r="2"/>
<circle cx="424.5" cy="505.5" r="2"/>
<circle cx="420.5" cy="506.5" r="2"/>
<circle cx="416.5" cy="508.5" r="2"/>
<circle cx="412.5" cy="509.5" r="2"/>
<circle cx="408.5" cy="511.5" r="2"/>
<circle cx="404.5" cy="512.5" r="2"/>
<circle cx="400.5" cy="513.5" r="2"/>
<circle cx="396.5" cy="515.5" r="2"/>
<circle cx="392.5" cy="516.5" r="2"/>
<circle cx="388.5" cy="518.5" r="2"/>
<circle cx="384.5" cy="519.5" r="2"/>
<circle cx="380.5" cy="520.5" r="2"/>
<circle cx="375.5" cy="522.5" r="2"/>
<circle cx="371.5" cy="523.5" r="2"/>
<circle cx="367.5" cy="525.5" r="2"/>
<circle cx="363.5" cy="526.5" r="2"/>
<circle cx="358.5" cy="527.5" r="2"/>
<circle cx="354.5" cy="529.5" r="2"/>
<circle cx="350.5" cy="530.5" r="2"/>
<circle cx="345.5" cy="532.5" r="2"/>
<circle cx="341.5" cy="533.5" r="2"/>
<circle cx="336.5" cy="534.5" r="2"/>
<circle cx="332.5" cy="536.5" r="2"/>
<circle cx="328.5" cy="116.5" r="2"/>
<circle cx="329.5" cy="116.5" r="2"/>
<circle cx="332.5" cy="118.5" r="2"/>
<circle cx="336.5" cy="119.5" r="2"/>
<circle cx="339.5" cy="120.5" r="2"/>
<circle cx="343.5" cy="122.5" r="2"/>
<circle cx="346.5" cy="123.5" r="2"/>
<circle cx="350.5" cy="125.5" r="2"/>
<circle cx="353.5" cy="126.5" r="2"/>
<circle cx="357.5" cy="127.5" r="2"/>
<circle cx="360.5" cy="129.5" r="2"/>
<circle cx="363.5" cy="130.5" r="2"/>
<circle cx="367.5" cy="132.5" r="2"/>
<circle cx="370.5" cy="133.5" r="2"/>
<circle cx="373.5" cy="134.5" r="2"/>
<circle cx="376.5" cy="136.5" r="2"/>
<circle cx="380.5" cy="137.5" r="2"/>
<circle cx="383.5" cy="139.5" r="2"/>
<circle cx="386.5" cy="140.5" r="2"/>
<circle cx="389.5" cy="141.5" r="2"/>
<circle cx="392.5" cy="143.5" r="2"/>
<circle cx="395.5" cy="144.5" r="2"/>
<circle cx="398.5" cy="146.5" r="2"/>
<circle cx="402.5" cy="147.5" r="2"/>
<circle cx="405.5" cy="148.5" r="2"/>
<circle cx="407.5" cy="150.5" r="2"/>
<circle cx="410.5" cy="151.5" r="2"/>
<circle cx="413.5" cy="153.5" r="2"/>
<circle cx="416.5" cy="154.5" r="2"/>
<circle cx="419.5" cy="155.5" r="2"/>
<circle cx="422.5" cy="157.5" r="2"/>
<circle cx="425.5" cy="158.5" r="2"/>
<circle cx="428.5" cy="160.5" r="2"/>
<circle cx="430.5" cy="161.5" r="2"/>
<circle cx="433.5" cy="162.5" r="2"/>
<circle cx="436.5" cy="164.5" r="2"/>
<circle cx="438.5" cy="165.5" r="2"/>
<circle cx="441.5" cy="167.5" r="2"/>
<circle cx="444.5" cy="168.5" r="2"/>
<circle cx="446.5" cy="169.5" r="2"/>
<circle cx="449.5" cy="171.5" r="2"/>
<circle cx="451.5" cy="172.5" r="2"/>
<circle cx="454.5" cy="174.5" r="2"/>
<circle cx="456.5" cy="175.5" r="2"/>
<circle cx="459.5" cy="176.5" r="2"/>
<circle cx="461.5" cy="178.5" r="2"/>
<circle cx="464.5" cy="179.5" r="2"/>
<circle cx="466.5" cy="181.5" r="2"/>
<circle cx="469.5" cy="182.5" r="2"/>
<circle cx="471.5" cy="183.5" r="2"/>
<circle cx="473.5" cy="185.5" r="2"/>
<circle cx="475.5" cy="186.5" r="2"/>
<circle cx="478.5" cy="188.5" r="2"/>
<circle cx="480.5" cy="189.5" r="2"/>
<circle cx="482.5" cy="190.5" r="2"/>
<circle cx="484.5" cy="192.5" r="2"/>
<circle cx="486.5" cy="193.5" r="2"/>
<circle cx="489.5" cy="195.5" r="2"/>
<circle cx="491.5" cy="196.5" r="2"/>
<circle cx="493.5" cy="197.5" r="2"/>
<circle cx="495.5" cy="199.5" r="2"/>
<circle cx="497.5" cy="200.5" r="2"/>
<circle cx="499.5" cy="202.5" r="2"/>
<circle cx="501.5" cy="203.5" r="2"/>
<circle cx="503.5" cy="204.5" r="2"/>
<circle cx="504.5" cy="206.5" r="2"/>
<circle cx="506.5" cy="207.5" r="2"/>
<circle cx="508.5" cy="209.5" r="2"/>
<circle cx="510.5" cy="210.5" r="2"/>
<circle cx="512.5" cy="211.5" r="2"/>
<circle cx="514.5" cy="213.5" r="2"/>
<circle cx="515.5" cy="214.5" r="2"/>
<circle cx="517.5" cy="216.5" r="2"/>
<circle cx="519.5" cy="217.5" r="2"/>
<circle cx="520.5" cy="218.5" r="2"/>
<circle cx="522.5" cy="220.5" r="2"/>
<circle cx="524.5" cy="221.5" r="2"/>
<circle cx="525.5" cy="222.5" r="2"/>
<circle cx="527.5" cy="224.5" r="2"/>
<circle cx="528.5" cy="225.5" r="2"/>
<circle cx="530.5" cy="227.5" r="2"/>
<circle cx="531.5" cy="228.5" r="2"/>
<circle cx="533.5" cy="229.5" r="2"/>
<circle cx="534.5" cy="231.5" r="2"/>
<circle cx="535.5" cy="232.5" r="2"/>
<circle cx="537.5" cy="234.5" r="2"/>
<circle cx="538.5" cy="235.5" r="2"/>
<circle cx="539.5" cy="236.5" r="2"/>
<circle cx="541.5" cy="238.5" r="2"/>
<circle cx="542.5" cy="239.5" r="2"/>
<circle cx="543.5" cy="241.5" r="2"/>
<circle cx="544.5" cy="242.5" r="2"/>
<circle cx="545.5" cy="243.5" r="2"/>
<circle cx="547.5" cy="245.5" r="2"/>
<circle cx="548.5" cy="246.5" r="2"/>
<circle cx="549.5" cy="248.5" r="2"/>
<circle cx="550.5" cy="249.5" r="2"/>
<circle cx="551.5" cy="250.5" r="2"/>
<circle cx="552.5" cy="252.5" r="2"/>
<circle cx="553.5" cy="253.5" r="2"/>
<circle cx="554.5" cy="255.5" r="2"/>
<circle cx="555.5" cy="256.5" r="2"/>
<circle cx="556.5" cy="257.5" r="2"/>
<circle cx="557.5" cy="259.5" r="2"/>
<circle cx="557.5" cy="260.5" r="2"/>
<circle cx="558.5" cy="262.5" r="2"/>
<circle cx="559.5" cy="263.5" r="2"/>
<circle cx="560.5" cy="264.5" r="2"/>
<circle cx="560.5" cy="266.5" r="2"/>
<circle cx="561.5" cy="267.5" r="2"/>
<circle cx="562.5" cy="269.5" r="2"/>
<circle cx="563.5" cy="270.5" r="2"/>
<circle cx="563.5" cy="271.5" r="2"/>
<circle cx="564.5" cy="273.5" r="2"/>
<circle cx="564.5" cy="274.5" r="2"/>
<circle cx="565.5" cy="276.5" r="2"/>
<circle cx="565.5" cy="277.5" r="2"/>
<circle cx="566.5" cy="278.5" r="2"/>
<circle cx="566.5" cy="280.5" r="2"/>
<circle cx="567.5" cy="281.5" r="2"/>
<circle cx="567.5" cy="283.5" r="2"/>
<circle cx="568.5" cy="284.5" r="2"/>
<circle cx="568.5" cy="285.5" r="2"/>
<circle cx="568.5" cy="287.5" r="2"/>
<circle cx="569.5" cy="288.5" r="2"/>
<circle cx="569.5" cy="290.5" r="2"/>
<circle cx="569.5" cy="291.5" r="2"/>
<circle cx="569.5" cy="292.5" r="2"/>
<circle cx="570.5" cy="294.5" r="2"/>
<circle cx="570.5" cy="295.5" r="2"/>
<circle cx="570.5" cy="297.5" r="2"/>
<circle cx="570.5" cy="298.5" r="2"/>
<circle cx="570.5" cy="299.5" r="2"/>
<circle cx="570.5" cy="301.5" r="2"/>
<circle cx="570.5" cy="302.5" r="2"/>
<circle cx="570.5" cy="304.5" r="2"/>
<circle cx="570.5" cy="305.5" r="2"/>
<circle cx="570.5" cy="306.5" r="2"/>
<circle cx="570.5" cy="308.5" r="2"/>
<circle cx="570.5" cy="309.5" r="2"/>
<circle cx="570.5" cy="311.5" r="2"/>
<circle cx="570.5" cy="312.5" r="2"/>
<circle cx="569.5" cy="313.5" r="2"/>
<circle cx="569.5" cy="315.5" r="2"/>
<circle cx="569.5" cy="316.5" r="2"/>
<circle cx="569.5" cy="318.5" r="2"/>
<circle cx="568.5" cy="319.5" r="2"/>
<circle cx="568.5" cy="320.5" r="2"/>
<circle cx="568.5" cy="322.5" r="2"/>
<circle cx="567.5" cy="323.5" r="2"/>
<circle cx="567.5" cy="324.5" r="2"/>
<circle cx="567.5" cy="326.5" r="2"/>
<circle cx="566.5" cy="327.5" r="2"/>
<circle cx="566.5" cy="329.5" r="2"/>
<circle cx="565.5" cy="330.5" r="2"/>
<circle cx="565.5" cy="331.5" r="2"/>
<circle cx="564.5" cy="333.5" r="2"/>
<circle cx="563.5" cy="334.5" r="2"/>
<circle cx="563.5" cy="336.5" r="2"/>
<circle cx="562.5" cy="337.5" r="2"/>
<circle cx="562.5" cy="338.5" r="2"/>
<circle cx="561.5" cy="340.5" r="2"/>
<circle cx="560.5" cy="341.5" r="2"/>
<circle cx="559.5" cy="343.5" r="2"/>
<circle cx="559.5" cy="344.5" r="2"/>
<circle cx="558.5" cy="345.5" r="2"/>
<circle cx="557.5" cy="347.5" r="2"/>
<circle cx="556.5" cy="348.5" r="2"/>
<circle cx="555.5" cy="350.5" r="2"/>
<circle cx="554.5" cy="351.5" r="2"/>
<circle cx="553.5" cy="352.5" r="2"/>
<circle cx="552.5" cy="354.5" r="2"/>
<circle cx="551.5" cy="355.5" r="2"/>
<circle cx="550.5" cy="357.5" r="2"/>
<circle cx="549.5" cy="358.5" r="2"/>
<circle cx="548.5" cy="359.5" r="2"/>
<circle cx="547.5" cy="361.5" r="2"/>
<circle cx="546.5" cy="362.5" r="2"/>
<circle cx="545.5" cy="364.5" r="2"/>
<circle cx="544.5" cy="365.5" r="2"/>
<circle cx="542.5" cy="366.5" r="2"/>
<circle cx="541.5" cy="368.5" r="2"/>
<circle cx="540.5" cy="369.5" r="2"/>
<circle cx="539.5" cy="371.5" r="2"/>
<circle cx="537.5" cy="372.5" r="2"/>
<circle cx="536.5" cy="373.5" r="2"/>
<circle cx="535.5" cy="375.5" r="2"/>
<circle cx="533.5" cy="376.5" r="2"/>
<circle cx="532.5" cy="378.5" r="2"/>
<circle cx="530.5" cy="379.5" r="2"/>
<circle cx="529.5" cy="380.5" r="2"/>
<circle cx="527.5" cy="382.5" r="2"/>
<circle cx="526.5" cy="383.5" r="2"/>
<circle cx="524.5" cy="385.5" r="2"/>
<circle cx="523.5" cy="386.5" r="2"/>
<circle cx="521.5" cy="387.5" r="2"/>
<circle cx="519.5" cy="389.5" r="2"/>
<circle cx="518.5" cy="390.5" r="2"/>
<circle cx="516.5" cy="392.5" r="2"/>
<circle cx="514.5" cy="393.5" r="2"/>
<circle cx="513.5" cy="394.5" r="2"/>
<circle cx="511.5" cy="396.5" r="2"/>
<circle cx="509.5" cy="397.5" r="2"/>
<circle cx="507.5" cy="399.5" r="2"/>
<circle cx="505.5" cy="400.5" r="2"/>
<circle cx="503.5" cy="401.5" r="2"/>
<circle cx="502.5" cy="403.5" r="2"/>
<circle cx="500.5" cy="404.5" r="2"/>
<circle cx="498.5" cy="406.5" r="2"/>
<circle cx="496.5" cy="407.5" r="2"/>
<circle cx="494.5" cy="408.5" r="2"/>
<circle cx="492.5" cy="410.5" r="2"/>
<circle cx="489.5" cy="411.5" r="2"/>
<circle cx="487.5" cy="413.5" r="2"/>
<circle cx="485.5" cy="414.5" r="2"/>
<circle cx="483.5" cy="415.5" r="2"/>
<circle cx="481.5" cy="417.5" r="2"/>
<circle cx="479.5" cy="418.5" r="2"/>
<circle cx="476.5" cy="420.5" r="2"/>
<circle cx="474.5" cy="421.5" r="2"/>
<circle cx="472.5" cy="422.5" r="2"/>
<circle cx="470.5" cy="424.5" r="2"/>
<circle cx="467.5" cy="425.5" r="2"/>
<circle cx="465.5" cy="426.5" r="2"/>
<circle cx="463.5" cy="428.5" r="2"/>
<circle cx="460.5" cy="429.5" r="2"/>
<circle cx="458.5" cy="431.5" r="2"/>
<circle cx="455.5" cy="432.5" r="2"/>
<circle cx="453.5" cy="433.5" r="2"/>
<circle cx="450.5" cy="435.5" r="2"/>
<circle cx="448.5" cy="436.5" r="2"/>
<circle cx="445.5" cy="438.5" r="2"/>
<circle cx="442.5" cy="439.5" r="2"/>
<circle cx="440.5" cy="440.5" r="2"/>
<circle cx="437.5" cy="442.5" r="2"/>
<circle cx="434.5" cy="443.5" r="2"/>
<circle cx="432.5" cy="445.5" r="2"/>
<circle cx="429.5" cy="446.5" r="2"/>
<circle cx="426.5" cy="447.5" r="2"/>
<circle cx="423.5" cy="449.5" r="2"/>
<circle cx="420.5" cy="450.5" r="2"/>
<circle cx="418.5" cy="452.5" r="2"/>
<circle cx="415.5" cy="453.5" r="2"/>
<circle cx="412.5" cy="454.5" r="2"/>
<circle cx="409.5" cy="456.5" r="2"/>
<circle cx="406.5" cy="457.5" r="2"/>
<circle cx="403.5" cy="459.5" r="2"/>
<circle cx="400.5" cy="460.5" r="2"/>
<circle cx="397.5" cy="461.5" r="2"/>
<circle cx="394.5" cy="463.5" r="2"/>
<circle cx="391.5" cy="464.5" r="2"/>
<circle cx="388.5" cy="466.5" r="2"/>
<circle cx="384.5" cy="467.5" r="2"/>
<circle cx="381.5" cy="468.5" r="2"/>
<circle cx="378.5" cy="470.5" r="2"/>
<circle cx="375.5" cy="471.5" r="2"/>
<circle cx="372.5" cy="473.5" r="2"/>
<circle cx="368.5" cy="474.5" r="2"/>
<circle cx="365.5" cy="475.5" r="2"/>
<circle cx="362.5" cy="477.5" r="2"/>
<circle cx="358.5" cy="478.5" r="2"/>
<circle cx="355.5" cy="480.5" r="2"/>
<circle cx="351.5" cy="481.5" r="2"/>
<circle cx="348.5" cy="482.5" r="2"/>
<circle cx="344.5" cy="484.5" r="2"/>
<circle cx="341.5" cy="485.5" r="2"/>
<circle cx="337.5" cy="487.5" r="2"/>
<circle cx="334.5" cy="488.5" r="2"/>
<circle cx="330.5" cy="489.5" r="2"/>
<circle cx="328.5" cy="153.5" r="2"/>
<circle cx="329.5" cy="154.5" r="2"/>
<circle cx="332.5" cy="155.5" r="2"/>
<circle cx="335.5" cy="157.5" r="2"/>
<circle cx="338.5" cy="158.5" r="2"/>
<circle cx="340.5" cy="160.5" r="2"/>
<circle cx="343.5" cy="161.5" r="2"/>
<circle cx="346.5" cy="162.5" r="2"/>
<circle cx="349.5" cy="164.5" r="2"/>
<circle cx="351.5" cy="165.5" r="2"/>
<circle cx="354.5" cy="167.5" r="2"/>
<circle cx="357.5" cy="168.5" r="2"/>
<circle cx="359.5" cy="169.5" r="2"/>
<circle cx="362.5" cy="171.5" r="2"/>
<circle cx="364.5" cy="172.5" r="2"/>
<circle cx="367.5" cy="174.5" r="2"/>
<circle cx="369.5" cy="175.5" r="2"/>
<circle cx="372.5" cy="176.5" r="2"/>
<circle cx="374.5" cy="178.5" r="2"/>
<circle cx="377.5" cy="179.5" r="2"/>
<circle cx="379.5" cy="181.5" r="2"/>
<circle cx="381.5" cy="182.5" r="2"/>
<circle cx="384.5" cy="183.5" r="2"/>
<circle cx="386.5" cy="185.5" r="2"/>
<circle cx="388.5" cy="186.5" r="2"/>
<circle cx="390.5" cy="188.5" r="2"/>
<circle cx="393.5" cy="189.5" r="2"/>
<circle cx="395.5" cy="190.5" r="2"/>
<circle cx="397.5" cy="192.5" r="2"/>
<circle cx="399.5" cy="193.5" r="2"/>
<circle cx="401.5" cy="195.5" r="2"/>
<circle cx="403.5" cy="196.5" r="2"/>
<circle cx="405.5" cy="197.5" r="2"/>
<circle cx="408.5" cy="199.5" r="2"/>
<circle cx="410.5" cy="200.5" r="2"/>
<circle cx="411.5" cy="202.5" r="2"/>
<circle cx="413.5" cy="203.5" r="2"/>
<circle cx="415.5" cy="204.5" r="2"/>
<circle cx="417.5" cy="206.5" r="2"/>
<circle cx="419.5" cy="207.5" r="2"/>
<circle cx="421.5" cy="209.5" r="2"/>
<circle cx="423.5" cy="210.5" r="2"/>
<circle cx="425.5" cy="211.5" r="2"/>
<circle cx="426.5" cy="213.5" r="2"/>
<circle cx="428.5" cy="214.5" r="2"/>
<circle cx="430.5" cy="215.5" r="2"/>
<circle cx="431.5" cy="217.5" r="2"/>
<circle cx="433.5" cy="218.5" r="2"/>
<circle cx="435.5" cy="220.5" r="2"/>
<circle cx="436.5" cy="221.5" r="2"/>
<circle cx="438.5" cy="222.5" r="2"/>
<circle cx="439.5" cy="224.5" r="2"/>
<circle cx="441.5" cy="225.5" r="2"/>
<circle cx="442.5" cy="227.5" r="2"/>
<circle cx="444.5" cy="228.5" r="2"/>
<circle cx="445.5" cy="229.5" r="2"/>
<circle cx="447.5" cy="231.5" r="2"/>
<circle cx="448.5" cy="232.5" r="2"/>
<circle cx="450.5" cy="234.5" r="2"/>
<circle cx="451.5" cy="235.5" r="2"/>
<circle cx="452.5" cy="236.5" r="2"/>
<circle cx="453.5" cy="238.5" r="2"/>
<circle cx="455.5" cy="239.5" r="2"/>
<circle cx="456.5" cy="241.5" r="2"/>
<circle cx="457.5" cy="242.5" r="2"/>
<circle cx="458.5" cy="243.5" r="2"/>
<circle cx="459.5" cy="245.5" r="2"/>
<circle cx="461.5" cy="246.5" r="2"/>
<circle cx="462.5" cy="248.5" r="2"/>
<circle cx="463.5" cy="249.5" r="2"/>
<circle cx="464.5" cy="250.5" r="2"/>
<circle cx="465.5" cy="252.5" r="2"/>
<circle cx="466.5" cy="253.5" r="2"/>
<circle cx="467.5" cy="255.5" r="2"/>
<circle cx="468.5" cy="256.5" r="2"/>
<circle cx="468.5" cy="257.5" r="2"/>
<circle cx="469.5" cy="259.5" r="2"/>
<circle cx="470.5" cy="260.5" r="2"/>
<circle cx="471.5" cy="262.5" r="2"/>
<circle cx="472.5" cy="263.5" r="2"/>
<circle cx="473.5" cy="264.5" r="2"/>
<circle cx="473.5" cy="266.5" r="2"/>
<circle cx="474.5" cy="267.5" r="2"/>
<circle cx="475.5" cy="269.5" r="2"/>
<circle cx="475.5" cy="270.5" r="2"/>
<circle cx="476.5" cy="271.5" r="2"/>
<circle cx="477.5" cy="273.5" r="2"/>
<circle cx="477.5" cy="274.5" r="2"/>
<circle cx="478.5" cy="276.5" r="2"/>
<circle cx="478.5" cy="277.5" r="2"/>
<circle cx="479.5" cy="278.5" r="2"/>
<circle cx="479.5" cy="280.5" r="2"/>
<circle cx="480.5" cy="281.5" r="2"/>
<circle cx="480.5" cy="283.5" r="2"/>
<circle cx="480.5" cy="284.5" r="2"/>
<circle cx="481.5" cy="285.5" r="2"/>
<circle cx="481.5" cy="287.5" r="2"/>
<circle cx="481.5" cy="288.5" r="2"/>
<circle cx="482.5" cy="290.5" r="2"/>
<circle cx="482.5" cy="291.5" r="2"/>
<circle cx="482.5" cy="292.5" r="2"/>
<circle cx="482.5" cy="294.5" r="2"/>
<circle cx="483.5" cy="295.5" r="2"/>
<circle cx="483.5" cy="297.5" r="2"/>
<circle cx="483.5" cy="298.5" r="2"/>
<circle cx="483.5" cy="299.5" r="2"/>
<circle cx="483.5" cy="301.5" r="2"/>
<circle cx="483.5" cy="302.5" r="2"/>
<circle cx="483.5" cy="304.5" r="2"/>
<circle cx="483.5" cy="305.5" r="2"/>
<circle cx="483.5" cy="306.5" r="2"/>
<circle cx="483.5" cy="308.5" r="2"/>
<circle cx="483.5" cy="309.5" r="2"/>
<circle cx="483.5" cy="311.5" r="2"/>
<circle cx="482.5" cy="312.5" r="2"/>
<circle cx="482.5" cy="313.5" r="2"/>
<circle cx="482.5" cy="315.5" r="2"/>
<circle cx="482.5" cy="316.5" r="2"/>
<circle cx="482.5" cy="317.5" r="2"/>
<circle cx="481.5" cy="319.5" r="2"/>
<circle cx="481.5" cy="320.5" r="2"/>
<circle cx="481.5" cy="322.5" r="2"/>
<circle cx="480.5" cy="323.5" r="2"/>
<circle cx="480.5" cy="324.5" r="2"/>
<circle cx="479.5" cy="326.5" r="2"/>
<circle cx="479.5" cy="327.5" r="2"/>
<circle cx="478.5" cy="329.5" r="2"/>
<circle cx="478.5" cy="330.5" r="2"/>
<circle cx="477.5" cy="331.5" r="2"/>
<circle cx="477.5" cy="333.5" r="2"/>
<circle cx="476.5" cy="334.5" r="2"/>
<circle cx="476.5" cy="336.5" r="2"/>
<circle cx="475.5" cy="337.5" r="2"/>
<circle cx="474.5" cy="338.5" r="2"/>
<circle cx="474.5" cy="340.5" r="2"/>
<circle cx="473.5" cy="341.5" r="2"/>
<circle cx="472.5" cy="343.5" r="2"/>
<circle cx="471.5" cy="344.5" r="2"/>
<circle cx="471.5" cy="345.5" r="2"/>
<circle cx="470.5" cy="347.5" r="2"/>
<circle cx="469.5" cy="348.5" r="2"/>
<circle cx="468.5" cy="350.5" r="2"/>
<circle cx="467.5" cy="351.5" r="2"/>
<circle cx="466.5" cy="352.5" r="2"/>
<circle cx="465.5" cy="354.5" r="2"/>
<circle cx="464.5" cy="355.5" r="2"/>
<circle cx="463.5" cy="357.5" r="2"/>
<circle cx="462.5" cy="358.5" r="2"/>
<circle cx="461.5" cy="359.5" r="2"/>
<circle cx="460.5" cy="361.5" r="2"/>
<circle cx="459.5" cy="362.5" r="2"/>
<circle cx="458.5" cy="364.5" r="2"/>
<circle cx="457.5" cy="365.5" r="2"/>
<circle cx="455.5" cy="366.5" r="2"/>
<circle cx="454.5" cy="368.5" r="2"/>
<circle cx="453.5" cy="369.5" r="2"/>
<circle cx="452.5" cy="371.5" r="2"/>
<circle cx="450.5" cy="372.5" r="2"/>
<circle cx="449.5" cy="373.5" r="2"/>
<circle cx="447.5" cy="375.5" r="2"/>
<circle cx="446.5" cy="376.5" r="2"/>
<circle cx="445.5" cy="378.5" r="2"/>
<circle cx="443.5" cy="379.5" r="2"/>
<circle cx="442.5" cy="380.5" r="2"/>
<circle cx="440.5" cy="382.5" r="2"/>
<circle cx="439.5" cy="383.5" r="2"/>
<circle cx="437.5" cy="385.5" r="2"/>
<circle cx="436.5" cy="386.5" r="2"/>
<circle cx="434.5" cy="387.5" r="2"/>
<circle cx="432.5" cy="389.5" r="2"/>
<circle cx="431.5" cy="390.5" r="2"/>
<circle cx="429.5" cy="392.5" r="2"/>
<circle cx="427.5" cy="393.5" r="2"/>
<circle cx="425.5" cy="394.5" r="2"/>
<circle cx="424.5" cy="396.5" r="2"/>
<circle cx="422.5" cy="397.5" r="2"/>
<circle cx="420.5" cy="399.5" r="2"/>
<circle cx="418.5" cy="400.5" r="2"/>
<circle cx="416.5" cy="401.5" r="2"/>
<circle cx="414.5" cy="403.5" r="2"/>
<circle cx="412.5" cy="404.5" r="2"/>
<circle cx="410.5" cy="406.5" r="2"/>
<circle cx="408.5" cy="407.5" r="2"/>
<circle cx="406.5" cy="408.5" r="2"/>
<circle cx="404.5" cy="410.5" r="2"/>
<circle cx="402.5" cy="411.5" r="2"/>
<circle cx="400.5" cy="413.5" r="2"/>
<circle cx="398.5" cy="414.5" r="2"/>
<circle cx="396.5" cy="415.5" r="2"/>
<circle cx="394.5" cy="417.5" r="2"/>
<circle cx="392.5" cy="418.5" r="2"/>
<circle cx="389.5" cy="419.5" r="2"/>
<circle cx="387.5" cy="421.5" r="2"/>
<circle cx="385.5" cy="422.5" r="2"/>
<circle cx="382.5" cy="424.5" r="2"/>
<circle cx="380.5" cy="425.5" r="2"/>
<circle cx="378.5" cy="426.5" r="2"/>
<circle cx="375.5" cy="428.5" r="2"/>
<circle cx="373.5" cy="429.5" r="2"/>
<circle cx="370.5" cy="431.5" r="2"/>
<circle cx="368.5" cy="432.5" r="2"/>
<circle cx="365.5" cy="433.5" r="2"/>
<circle cx="363.5" cy="435.5" r="2"/>
<circle cx="360.5" cy="436.5" r="2"/>
<circle cx="358.5" cy="438.5" r="2"/>
<circle cx="355.5" cy="439.5" r="2"/>
<circle cx="353.5" cy="440.5" r="2"/>
<circle cx="350.5" cy="442.5" r="2"/>
<circle cx="347.5" cy="443.5" r="2"/>
<circle cx="344.5" cy="445.5" r="2"/>
<circle cx="342.5" cy="446.5" r="2"/>
<circle cx="339.5" cy="447.5" r="2"/>
<circle cx="336.5" cy="449.5" r="2"/>
<circle cx="333.5" cy="450.5" r="2"/>
<circle cx="330.5" cy="452.5" r="2"/>
<circle cx="328.5" cy="183.5" r="2"/>
<circle cx="328.5" cy="184.5" r="2"/>
<circle cx="331.5" cy="185.5" r="2"/>
<circle cx="333.5" cy="186.5" r="2"/>
<circle cx="335.5" cy="188.5" r="2"/>
<circle cx="337.5" cy="189.5" r="2"/>
<circle cx="340.5" cy="191.5" r="2"/>
<circle cx="342.5" cy="192.5" r="2"/>
<circle cx="344.5" cy="193.5" r="2"/>
<circle cx="346.5" cy="195.5" r="2"/>
<circle cx="348.5" cy="196.5" r="2"/>
<circle cx="350.5" cy="198.5" r="2"/>
<circle cx="352.5" cy="199.5" r="2"/>
<circle cx="354.5" cy="200.5" r="2"/>
<circle cx="356.5" cy="202.5" r="2"/>
<circle cx="358.5" cy="203.5" r="2"/>
<circle cx="360.5" cy="205.5" r="2"/>
<circle cx="362.5" cy="206.5" r="2"/>
<circle cx="364.5" cy="207.5" r="2"/>
<circle cx="366.5" cy="209.5" r="2"/>
<circle cx="367.5" cy="210.5" r="2"/>
<circle cx="369.5" cy="212.5" r="2"/>
<circle cx="371.5" cy="213.5" r="2"/>
<circle cx="373.5" cy="214.5" r="2"/>
<circle cx="374.5" cy="216.5" r="2"/>
<circle cx="376.5" cy="217.5" r="2"/>
<circle cx="378.5" cy="219.5" r="2"/>
<circle cx="379.5" cy="220.5" r="2"/>
<circle cx="381.5" cy="221.5" r="2"/>
<circle cx="382.5" cy="223.5" r="2"/>
<circle cx="384.5" cy="224.5" r="2"/>
<circle cx="386.5" cy="226.5" r="2"/>
<circle cx="387.5" cy="227.5" r="2"/>
<circle cx="388.5" cy="228.5" r="2"/>
<circle cx="390.5" cy="230.5" r="2"/>
<circle cx="391.5" cy="231.5" r="2"/>
<circle cx="393.5" cy="233.5" r="2"/>
<circle cx="394.5" cy="234.5" r="2"/>
<circle cx="395.5" cy="235.5" r="2"/>
<circle cx="397.5" cy="237.5" r="2"/>
<circle cx="398.5" cy="238.5" r="2"/>
<circle cx="399.5" cy="240.5" r="2"/>
<circle cx="400.5" cy="241.5" r="2"/>
<circle cx="402.5" cy="242.5" r="2"/>
<circle cx="403.5" cy="244.5" r="2"/>
<circle cx="404.5" cy="245.5" r="2"/>
<circle cx="405.5" cy="247.5" r="2"/>
<circle cx="406.5" cy="248.5" r="2"/>
<circle cx="407.5" cy="249.5" r="2"/>
<circle cx="408.5" cy="251.5" r="2"/>
<circle cx="409.5" cy="252.5" r="2"/>
<circle cx="410.5" cy="253.5" r="2"/>
<circle cx="411.5" cy="255.5" r="2"/>
<circle cx="412.5" cy="256.5" r="2"/>
<circle cx="413.5" cy="258.5" r="2"/>
<circle cx="414.5" cy="259.5" r="2"/>
<circle cx="415.5" cy="260.5" r="2"/>
<circle cx="415.5" cy="262.5" r="2"/>
<circle cx="416.5" cy="263.5" r="2"/>
<circle cx="417.5" cy="265.5" r="2"/>
<circle cx="418.5" cy="266.5" r="2"/>
<circle cx="418.5" cy="267.5" r="2"/>
<circle cx="419.5" cy="269.5" r="2"/>
<circle cx="420.5" cy="270.5" r="2"/>
<circle cx="420.5" cy="272.5" r="2"/>
<circle cx="421.5" cy="273.5" r="2"/>
<circle cx="421.5" cy="274.5" r="2"/>
<circle cx="422.5" cy="276.5" r="2"/>
<circle cx="423.5" cy="277.5" r="2"/>
<circle cx="423.5" cy="279.5" r="2"/>
<circle cx="423.5" cy="280.5" r="2"/>
<circle cx="424.5" cy="281.5" r="2"/>
<circle cx="424.5" cy="283.5" r="2"/>
<circle cx="425.5" cy="284.5" r="2"/>
<circle cx="425.5" cy="286.5" r="2"/>
<circle cx="425.5" cy="287.5" r="2"/>
<circle cx="426.5" cy="288.5" r="2"/>
<circle cx="426.5" cy="290.5" r="2"/>
<circle cx="426.5" cy="291.5" r="2"/>
<circle cx="426.5" cy="293.5" r="2"/>
<circle cx="427.5" cy="294.5" r="2"/>
<circle cx="427.5" cy="295.5" r="2"/>
<circle cx="427.5" cy="297.5" r="2"/>
<circle cx="427.5" cy="298.5" r="2"/>
<circle cx="427.5" cy="300.5" r="2"/>
<circle cx="427.5" cy="301.5" r="2"/>
<circle cx="427.5" cy="302.5" r="2"/>
<circle cx="427.5" cy="304.5" r="2"/>
<circle cx="427.5" cy="305.5" r="2"/>
<circle cx="427.5" cy="307.5" r="2"/>
<circle cx="427.5" cy="308.5" r="2"/>
<circle cx="427.5" cy="309.5" r="2"/>
<circle cx="427.5" cy="311.5" r="2"/>
<circle cx="427.5" cy="312.5" r="2"/>
<circle cx="426.5" cy="314.5" r="2"/>
<circle cx="426.5" cy="315.5" r="2"/>
<circle cx="426.5" cy="316.5" r="2"/>
<circle cx="426.5" cy="318.5" r="2"/>
<circle cx="425.5" cy="319.5" r="2"/>
<circle cx="425.5" cy="321.5" r="2"/>
<circle cx="425.5" cy="322.5" r="2"/>
<circle cx="424.5" cy="323.5" r="2"/>
<circle cx="424.5" cy="325.5" r="2"/>
<circle cx="424.5" cy="326.5" r="2"/>
<circle cx="423.5" cy="328.5" r="2"/>
<circle cx="423.5" cy="329.5" r="2"/>
<circle cx="422.5" cy="330.5" r="2"/>
<circle cx="422.5" cy="332.5" r="2"/>
<circle cx="421.5" cy="333.5" r="2"/>
<circle cx="420.5" cy="335.5" r="2"/>
<circle cx="420.5" cy="336.5" r="2"/>
<circle cx="419.5" cy="337.5" r="2"/>
<circle cx="418.5" cy="339.5" r="2"/>
<circle cx="418.5" cy="340.5" r="2"/>
<circle cx="417.5" cy="342.5" r="2"/>
<circle cx="416.5" cy="343.5" r="2"/>
<circle cx="415.5" cy="344.5" r="2"/>
<circle cx="415.5" cy="346.5" r="2"/>
<circle cx="414.5" cy="347.5" r="2"/>
<circle cx="413.5" cy="349.5" r="2"/>
<circle cx="412.5" cy="350.5" r="2"/>
<circle cx="411.5" cy="351.5" r="2"/>
<circle cx="410.5" cy="353.5" r="2"/>
<circle cx="409.5" cy="354.5" r="2"/>
<circle cx="408.5" cy="355.5" r="2"/>
<circle cx="407.5" cy="357.5" r="2"/>
<circle cx="406.5" cy="358.5" r="2"/>
<circle cx="405.5" cy="360.5" r="2"/>
<circle cx="404.5" cy="361.5" r="2"/>
<circle cx="403.5" cy="362.5" r="2"/>
<circle cx="402.5" cy="364.5" r="2"/>
<circle cx="400.5" cy="365.5" r="2"/>
<circle cx="399.5" cy="367.5" r="2"/>
<circle cx="398.5" cy="368.5" r="2"/>
<circle cx="397.5" cy="369.5" r="2"/>
<circle cx="395.5" cy="371.5" r="2"/>
<circle cx="394.5" cy="372.5" r="2"/>
<circle cx="393.5" cy="374.5" r="2"/>
<circle cx="391.5" cy="375.5" r="2"/>
<circle cx="390.5" cy="376.5" r="2"/>
<circle cx="389.5" cy="378.5" r="2"/>
<circle cx="387.5" cy="379.5" r="2"/>
<circle cx="386.5" cy="381.5" r="2"/>
<circle cx="384.5" cy="382.5" r="2"/>
<circle cx="383.5" cy="383.5" r="2"/>
<circle cx="381.5" cy="385.5" r="2"/>
<circle cx="379.5" cy="386.5" r="2"/>
<circle cx="378.5" cy="388.5" r="2"/>
<circle cx="376.5" cy="389.5" r="2"/>
<circle cx="374.5" cy="390.5" r="2"/>
<circle cx="373.5" cy="392.5" r="2"/>
<circle cx="371.5" cy="393.5" r="2"/>
<circle cx="369.5" cy="395.5" r="2"/>
<circle cx="368.5" cy="396.5" r="2"/>
<circle cx="366.5" cy="397.5" r="2"/>
<circle cx="364.5" cy="399.5" r="2"/>
<circle cx="362.5" cy="400.5" r="2"/>
<circle cx="360.5" cy="402.5" r="2"/>
<circle cx="358.5" cy="403.5" r="2"/>
<circle cx="356.5" cy="404.5" r="2"/>
<circle cx="354.5" cy="406.5" r="2"/>
<circle cx="352.5" cy="407.5" r="2"/>
<circle cx="350.5" cy="409.5" r="2"/>
<circle cx="348.5" cy="410.5" r="2"/>
<circle cx="346.5" cy="411.5" r="2"/>
<circle cx="344.5" cy="413.5" r="2"/>
<circle cx="342.5" cy="414.5" r="2"/>
<circle cx="340.5" cy="416.5" r="2"/>
<circle cx="338.5" cy="417.5" r="2"/>
<circle cx="335.5" cy="418.5" r="2"/>
<circle cx="333.5" cy="420.5" r="2"/>
<circle cx="331.5" cy="421.5" r="2"/>
<circle cx="329.5" cy="423.5" r="2"/>
<circle cx="328.5" cy="207.5" r="2"/>
<circle cx="329.5" cy="208.5" r="2"/>
<circle cx="331.5" cy="210.5" r="2"/>
<circle cx="333.5" cy="211.5" r="2"/>
<circle cx="335.5" cy="213.5" r="2"/>
<circle cx="337.5" cy="214.5" r="2"/>
<circle cx="338.5" cy="215.5" r="2"/>
<circle cx="340.5" cy="217.5" r="2"/>
<circle cx="342.5" cy="218.5" r="2"/>
<circle cx="343.5" cy="220.5" r="2"/>
<circle cx="345.5" cy="221.5" r="2"/>
<circle cx="346.5" cy="222.5" r="2"/>
<circle cx="348.5" cy="224.5" r="2"/>
<circle cx="349.5" cy="225.5" r="2"/>
<circle cx="351.5" cy="227.5" r="2"/>
<circle cx="352.5" cy="228.5" r="2"/>
<circle cx="354.5" cy="229.5" r="2"/>
<circle cx="355.5" cy="231.5" r="2"/>
<circle cx="357.5" cy="232.5" r="2"/>
<circle cx="358.5" cy="234.5" r="2"/>
<circle cx="359.5" cy="235.5" r="2"/>
<circle cx="361.5" cy="236.5" r="2"/>
<circle cx="362.5" cy="238.5" r="2"/>
<circle cx="363.5" cy="239.5" r="2"/>
<circle cx="364.5" cy="241.5" r="2"/>
<circle cx="366.5" cy="242.5" r="2"/>
<circle cx="367.5" cy="243.5" r="2"/>
<circle cx="368.5" cy="245.5" r="2"/>
<circle cx="369.5" cy="246.5" r="2"/>
<circle cx="370.5" cy="248.5" r="2"/>
<circle cx="371.5" cy="249.5" r="2"/>
<circle cx="372.5" cy="250.5" r="2"/>
<circle cx="373.5" cy="252.5" r="2"/>
<circle cx="374.5" cy="253.5" r="2"/>
<circle cx="375.5" cy="255.5" r="2"/>
<circle cx="376.5" cy="256.5" r="2"/>
<circle cx="377.5" cy="257.5" r="2"/>
<circle cx="378.5" cy="259.5" r="2"/>
<circle cx="379.5" cy="260.5" r="2"/>
<circle cx="379.5" cy="262.5" r="2"/>
<circle cx="380.5" cy="263.5" r="2"/>
<circle cx="381.5" cy="264.5" r="2"/>
<circle cx="382.5" cy="266.5" r="2"/>
<circle cx="382.5" cy="267.5" r="2"/>
<circle cx="383.5" cy="269.5" r="2"/>
<circle cx="384.5" cy="270.5" r="2"/>
<circle cx="384.5" cy="271.5" r="2"/>
<circle cx="385.5" cy="273.5" r="2"/>
<circle cx="386.5" cy="274.5" r="2"/>
<circle cx="386.5" cy="276.5" r="2"/>
<circle cx="387.5" cy="277.5" r="2"/>
<circle cx="387.5" cy="278.5" r="2"/>
<circle cx="388.5" cy="280.5" r="2"/>
<circle cx="388.5" cy="281.5" r="2"/>
<circle cx="389.5" cy="282.5" r="2"/>
<circle cx="389.5" cy="284.5" r="2"/>
<circle cx="389.5" cy="285.5" r="2"/>
<circle cx="390.5" cy="287.5" r="2"/>
<circle cx="390.5" cy="288.5" r="2"/>
<circle cx="390.5" cy="289.5" r="2"/>
<circle cx="390.5" cy="291.5" r="2"/>
<circle cx="391.5" cy="292.5" r="2"/>
<circle cx="391.5" cy="294.5" r="2"/>
<circle cx="391.5" cy="295.5" r="2"/>
<circle cx="391.5" cy="296.5" r="2"/>
<circle cx="391.5" cy="298.5" r="2"/>
<circle cx="391.5" cy="299.5" r="2"/>
<circle cx="391.5" cy="301.5" r="2"/>
<circle cx="391.5" cy="302.5" r="2"/>
<circle cx="391.5" cy="303.5" r="2"/>
<circle cx="391.5" cy="305.5" r="2"/>
<circle cx="391.5" cy="306.5" r="2"/>
<circle cx="391.5" cy="308.5" r="2"/>
<circle cx="391.5" cy="309.5" r="2"/>
<circle cx="391.5" cy="310.5" r="2"/>
<circle cx="391.5" cy="312.5" r="2"/>
<circle cx="391.5" cy="313.5" r="2"/>
<circle cx="391.5" cy="315.5" r="2"/>
<circle cx="390.5" cy="316.5" r="2"/>
<circle cx="390.5" cy="317.5" r="2"/>
<circle cx="390.5" cy="319.5" r="2"/>
<circle cx="389.5" cy="320.5" r="2"/>
<circle cx="389.5" cy="322.5" r="2"/>
<circle cx="389.5" cy="323.5" r="2"/>
<circle cx="388.5" cy="324.5" r="2"/>
<circle cx="388.5" cy="326.5" r="2"/>
<circle cx="387.5" cy="327.5" r="2"/>
<circle cx="387.5" cy="329.5" r="2"/>
<circle cx="386.5" cy="330.5" r="2"/>
<circle cx="386.5" cy="331.5" r="2"/>
<circle cx="385.5" cy="333.5" r="2"/>
<circle cx="385.5" cy="334.5" r="2"/>
<circle cx="384.5" cy="336.5" r="2"/>
<circle cx="384.5" cy="337.5" r="2"/>
<circle cx="383.5" cy="338.5" r="2"/>
<circle cx="382.5" cy="340.5" r="2"/>
<circle cx="381.5" cy="341.5" r="2"/>
<circle cx="381.5" cy="343.5" r="2"/>
<circle cx="380.5" cy="344.5" r="2"/>
<circle cx="379.5" cy="345.5" r="2"/>
<circle cx="378.5" cy="347.5" r="2"/>
<circle cx="377.5" cy="348.5" r="2"/>
<circle cx="377.5" cy="350.5" r="2"/>
<circle cx="376.5" cy="351.5" r="2"/>
<circle cx="375.5" cy="352.5" r="2"/>
<circle cx="374.5" cy="354.5" r="2"/>
<circle cx="373.5" cy="355.5" r="2"/>
<circle cx="372.5" cy="357.5" r="2"/>
<circle cx="371.5" cy="358.5" r="2"/>
<circle cx="370.5" cy="359.5" r="2"/>
<circle cx="369.5" cy="361.5" r="2"/>
<circle cx="367.5" cy="362.5" r="2"/>
<circle cx="366.5" cy="364.5" r="2"/>
<circle cx="365.5" cy="365.5" r="2"/>
<circle cx="364.5" cy="366.5" r="2"/>
<circle cx="363.5" cy="368.5" r="2"/>
<circle cx="361.5" cy="369.5" r="2"/>
<circle cx="360.5" cy="371.5" r="2"/>
<circle cx="359.5" cy="372.5" r="2"/>
<circle cx="357.5" cy="373.5" r="2"/>
<circle cx="356.5" cy="375.5" r="2"/>
<circle cx="355.5" cy="376.5" r="2"/>
<circle cx="353.5" cy="378.5" r="2"/>
<circle cx="352.5" cy="379.5" r="2"/>
<circle cx="350.5" cy="380.5" r="2"/>
<circle cx="349.5" cy="382.5" r="2"/>
<circle cx="347.5" cy="383.5" r="2"/>
<circle cx="346.5" cy="384.5" r="2"/>
<circle cx="344.5" cy="386.5" r="2"/>
<circle cx="343.5" cy="387.5" r="2"/>
<circle cx="341.5" cy="389.5" r="2"/>
<circle cx="339.5" cy="390.5" r="2"/>
<circle cx="338.5" cy="391.5" r="2"/>
<circle cx="336.5" cy="393.5" r="2"/>
<circle cx="334.5" cy="394.5" r="2"/>
<circle cx="332.5" cy="396.5" r="2"/>
<circle cx="330.5" cy="397.5" r="2"/>
<circle cx="329.5" cy="398.5" r="2"/>
<circle cx="328.5" cy="227.5" r="2"/>
<circle cx="329.5" cy="227.5" r="2"/>
<circle cx="330.5" cy="229.5" r="2"/>
<circle cx="332.5" cy="230.5" r="2"/>
<circle cx="333.5" cy="232.5" r="2"/>
<circle cx="335.5" cy="233.5" r="2"/>
<circle cx="336.5" cy="234.5" r="2"/>
<circle cx="337.5" cy="236.5" r="2"/>
<circle cx="339.5" cy="237.5" r="2"/>
<circle cx="340.5" cy="239.5" r="2"/>
<circle cx="341.5" cy="240.5" r="2"/>
<circle cx="342.5" cy="241.5" r="2"/>
<circle cx="343.5" cy="243.5" r="2"/>
<circle cx="345.5" cy="244.5" r="2"/>
<circle cx="346.5" cy="246.5" r="2"/>
<circle cx="347.5" cy="247.5" r="2"/>
<circle cx="348.5" cy="248.5" r="2"/>
<circle cx="349.5" cy="250.5" r="2"/>
<circle cx="350.5" cy="251.5" r="2"/>
<circle cx="351.5" cy="253.5" r="2"/>
<circle cx="352.5" cy="254.5" r="2"/>
<circle cx="353.5" cy="255.5" r="2"/>
<circle cx="354.5" cy="257.5" r="2"/>
<circle cx="355.5" cy="258.5" r="2"/>
<circle cx="355.5" cy="260.5" r="2"/>
<circle cx="356.5" cy="261.5" r="2"/>
<circle cx="357.5" cy="262.5" r="2"/>
<circle cx="358.5" cy="264.5" r="2"/>
<circle cx="359.5" cy="265.5" r="2"/>
<circle cx="359.5" cy="267.5" r="2"/>
<circle cx="360.5" cy="268.5" r="2"/>
<circle cx="361.5" cy="269.5" r="2"/>
<circle cx="361.5" cy="271.5" r="2"/>
<circle cx="362.5" cy="272.5" r="2"/>
<circle cx="363.5" cy="274.5" r="2"/>
<circle cx="363.5" cy="275.5" r="2"/>
<circle cx="364.5" cy="276.5" r="2"/>
<circle cx="364.5" cy="278.5" r="2"/>
<circle cx="365.5" cy="279.5" r="2"/>
<circle cx="365.5" cy="281.5" r="2"/>
<circle cx="366.5" cy="282.5" r="2"/>
<circle cx="366.5" cy="283.5" r="2"/>
<circle cx="366.5" cy="285.5" r="2"/>
<circle cx="367.5" cy="286.5" r="2"/>
<circle cx="367.5" cy="288.5" r="2"/>
<circle cx="367.5" cy="289.5" r="2"/>
<circle cx="367.5" cy="290.5" r="2"/>
<circle cx="368.5" cy="292.5" r="2"/>
<circle cx="368.5" cy="293.5" r="2"/>
<circle cx="368.5" cy="295.5" r="2"/>
<circle cx="368.5" cy="296.5" r="2"/>
<circle cx="368.5" cy="297.5" r="2"/>
<circle cx="368.5" cy="299.5" r="2"/>
<circle cx="369.5" cy="300.5" r="2"/>
<circle cx="369.5" cy="302.5" r="2"/>
<circle cx="369.5" cy="303.5" r="2"/>
<circle cx="369.5" cy="304.5" r="2"/>
<circle cx="369.5" cy="306.5" r="2"/>
<circle cx="369.5" cy="307.5" r="2"/>
<circle cx="368.5" cy="308.5" r="2"/>
<circle cx="368.5" cy="310.5" r="2"/>
<circle cx="368.5" cy="311.5" r="2"/>
<circle cx="368.5" cy="313.5" r="2"/>
<circle cx="368.5" cy="314.5" r="2"/>
<circle cx="368.5" cy="315.5" r="2"/>
<circle cx="367.5" cy="317.5" r="2"/>
<circle cx="367.5" cy="318.5" r="2"/>
<circle cx="367.5" cy="320.5" r="2"/>
<circle cx="366.5" cy="321.5" r="2"/>
<circle cx="366.5" cy="322.5" r="2"/>
<circle cx="366.5" cy="324.5" r="2"/>
<circle cx="365.5" cy="325.5" r="2"/>
<circle cx="365.5" cy="327.5" r="2"/>
<circle cx="364.5" cy="328.5" r="2"/>
<circle cx="364.5" cy="329.5" r="2"/>
<circle cx="363.5" cy="331.5" r="2"/>
<circle cx="363.5" cy="332.5" r="2"/>
<circle cx="362.5" cy="334.5" r="2"/>
<circle cx="362.5" cy="335.5" r="2"/>
<circle cx="361.5" cy="336.5" r="2"/>
<circle cx="360.5" cy="338.5" r="2"/>
<circle cx="360.5" cy="339.5" r="2"/>
<circle cx="359.5" cy="341.5" r="2"/>
<circle cx="358.5" cy="342.5" r="2"/>
<circle cx="357.5" cy="343.5" r="2"/>
<circle cx="357.5" cy="345.5" r="2"/>
<circle cx="356.5" cy="346.5" r="2"/>
<circle cx="355.5" cy="348.5" r="2"/>
<circle cx="354.5" cy="349.5" r="2"/>
<circle cx="353.5" cy="350.5" r="2"/>
<circle cx="352.5" cy="352.5" r="2"/>
<circle cx="351.5" cy="353.5" r="2"/>
<circle cx="350.5" cy="355.5" r="2"/>
<circle cx="349.5" cy="356.5" r="2"/>
<circle cx="348.5" cy="357.5" r="2"/>
<circle cx="347.5" cy="359.5" r="2"/>
<circle cx="346.5" cy="360.5" r="2"/>
<circle cx="345.5" cy="362.5" r="2"/>
<circle cx="344.5" cy="363.5" r="2"/>
<circle cx="343.5" cy="364.5" r="2"/>
<circle cx="341.5" cy="366.5" r="2"/>
<circle cx="340.5" cy="367.5" r="2"/>
<circle cx="339.5" cy="369.5" r="2"/>
<circle cx="338.5" cy="370.5" r="2"/>
<circle cx="336.5" cy="371.5" r="2"/>
<circle cx="335.5" cy="373.5" r="2"/>
<circle cx="334.5" cy="374.5" r="2"/>
<circle cx="332.5" cy="376.5" r="2"/>
<circle cx="331.5" cy="377.5" r="2"/>
<circle cx="330.5" cy="378.5" r="2"/>
<circle cx="328.5" cy="380.5" r="2"/>
<circle cx="328.5" cy="242.5" r="2"/>
<circle cx="329.5" cy="243.5" r="2"/>
<circle cx="330.5" cy="245.5" r="2"/>
<circle cx="331.5" cy="246.5" r="2"/>
<circle cx="332.5" cy="247.5" r="2"/>
<circle cx="334.5" cy="249.5" r="2"/>
<circle cx="335.5" cy="250.5" r="2"/>
<circle cx="336.5" cy="252.5" r="2"/>
<circle cx="337.5" cy="253.5" r="2"/>
<circle cx="338.5" cy="254.5" r="2"/>
<circle cx="338.5" cy="256.5" r="2"/>
<circle cx="339.5" cy="257.5" r="2"/>
<circle cx="340.5" cy="259.5" r="2"/>
<circle cx="341.5" cy="260.5" r="2"/>
<circle cx="342.5" cy="261.5" r="2"/>
<circle cx="343.5" cy="263.5" r="2"/>
<circle cx="343.5" cy="264.5" r="2"/>
<circle cx="344.5" cy="266.5" r="2"/>
<circle cx="345.5" cy="267.5" r="2"/>
<circle cx="346.5" cy="268.5" r="2"/>
<circle cx="346.5" cy="270.5" r="2"/>
<circle cx="347.5" cy="271.5" r="2"/>
<circle cx="348.5" cy="273.5" r="2"/>
<circle cx="348.5" cy="274.5" r="2"/>
<circle cx="349.5" cy="275.5" r="2"/>
<circle cx="349.5" cy="277.5" r="2"/>
<circle cx="350.5" cy="278.5" r="2"/>
<circle cx="350.5" cy="280.5" r="2"/>
<circle cx="351.5" cy="281.5" r="2"/>
<circle cx="351.5" cy="282.5" r="2"/>
<circle cx="351.5" cy="284.5" r="2"/>
<circle cx="352.5" cy="285.5" r="2"/>
<circle cx="352.5" cy="287.5" r="2"/>
<circle cx="352.5" cy="288.5" r="2"/>
<circle cx="353.5" cy="289.5" r="2"/>
<circle cx="353.5" cy="291.5" r="2"/>
<circle cx="353.5" cy="292.5" r="2"/>
<circle cx="353.5" cy="294.5" r="2"/>
<circle cx="354.5" cy="295.5" r="2"/>
<circle cx="354.5" cy="296.5" r="2"/>
<circle cx="354.5" cy="298.5" r="2"/>
<circle cx="354.5" cy="299.5" r="2"/>
<circle cx="354.5" cy="301.5" r="2"/>
<circle cx="354.5" cy="302.5" r="2"/>
<circle cx="354.5" cy="303.5" r="2"/>
<circle cx="354.5" cy="305.5" r="2"/>
<circle cx="354.5" cy="306.5" r="2"/>
<circle cx="354.5" cy="307.5" r="2"/>
<circle cx="354.5" cy="309.5" r="2"/>
<circle cx="354.5" cy="310.5" r="2"/>
<circle cx="353.5" cy="312.5" r="2"/>
<circle cx="353.5" cy="313.5" r="2"/>
<circle cx="353.5" cy="314.5" r="2"/>
<circle cx="353.5" cy="316.5" r="2"/>
<circle cx="353.5" cy="317.5" r="2"/>
<circle cx="352.5" cy="319.5" r="2"/>
<circle cx="352.5" cy="320.5" r="2"/>
<circle cx="352.5" cy="321.5" r="2"/>
<circle cx="351.5" cy="323.5" r="2"/>
<circle cx="351.5" cy="324.5" r="2"/>
<circle cx="350.5" cy="326.5" r="2"/>
<circle cx="350.5" cy="327.5" r="2"/>
<circle cx="350.5" cy="328.5" r="2"/>
<circle cx="349.5" cy="330.5" r="2"/>
<circle cx="349.5" cy="331.5" r="2"/>
<circle cx="348.5" cy="333.5" r="2"/>
<circle cx="347.5" cy="334.5" r="2"/>
<circle cx="347.5" cy="335.5" r="2"/>
<circle cx="346.5" cy="337.5" r="2"/>
<circle cx="345.5" cy="338.5" r="2"/>
<circle cx="345.5" cy="340.5" r="2"/>
<circle cx="344.5" cy="341.5" r="2"/>
<circle cx="343.5" cy="342.5" r="2"/>
<circle cx="343.5" cy="344.5" r="2"/>
<circle cx="342.5" cy="345.5" r="2"/>
<circle cx="341.5" cy="347.5" r="2"/>
<circle cx="340.5" cy="348.5" r="2"/>
<circle cx="339.5" cy="349.5" r="2"/>
<circle cx="338.5" cy="351.5" r="2"/>
<circle cx="337.5" cy="352.5" r="2"/>
<circle cx="336.5" cy="354.5" r="2"/>
<circle cx="335.5" cy="355.5" r="2"/>
<circle cx="334.5" cy="356.5" r="2"/>
<circle cx="333.5" cy="358.5" r="2"/>
<circle cx="332.5" cy="359.5" r="2"/>
<circle cx="331.5" cy="361.5" r="2"/>
<circle cx="330.5" cy="362.5" r="2"/>
<circle cx="329.5" cy="363.5" r="2"/>
<circle cx="328.5" cy="254.5" r="2"/>
<circle cx="328.5" cy="254.5" r="2"/>
<circle cx="329.5" cy="256.5" r="2"/>
<circle cx="330.5" cy="257.5" r="2"/>
<circle cx="331.5" cy="259.5" r="2"/>
<circle cx="332.5" cy="260.5" r="2"/>
<circle cx="333.5" cy="261.5" r="2"/>
<circle cx="333.5" cy="263.5" r="2"/>
<circle cx="334.5" cy="264.5" r="2"/>
<circle cx="335.5" cy="266.5" r="2"/>
<circle cx="336.5" cy="267.5" r="2"/>
<circle cx="336.5" cy="268.5" r="2"/>
<circle cx="337.5" cy="270.5" r="2"/>
<circle cx="338.5" cy="271.5" r="2"/>
<circle cx="338.5" cy="273.5" r="2"/>
<circle cx="339.5" cy="274.5" r="2"/>
<circle cx="339.5" cy="275.5" r="2"/>
<circle cx="340.5" cy="277.5" r="2"/>
<circle cx="340.5" cy="278.5" r="2"/>
<circle cx="341.5" cy="280.5" r="2"/>
<circle cx="341.5" cy="281.5" r="2"/>
<circle cx="342.5" cy="282.5" r="2"/>
<circle cx="342.5" cy="284.5" r="2"/>
<circle cx="342.5" cy="285.5" r="2"/>
<circle cx="343.5" cy="287.5" r="2"/>
<circle cx="343.5" cy="288.5" r="2"/>
<circle cx="343.5" cy="289.5" r="2"/>
<circle cx="344.5" cy="291.5" r="2"/>
<circle cx="344.5" cy="292.5" r="2"/>
<circle cx="344.5" cy="294.5" r="2"/>
<circle cx="344.5" cy="295.5" r="2"/>
<circle cx="344.5" cy="296.5" r="2"/>
<circle cx="344.5" cy="298.5" r="2"/>
<circle cx="345.5" cy="299.5" r="2"/>
<circle cx="345.5" cy="301.5" r="2"/>
<circle cx="345.5" cy="302.5" r="2"/>
<circle cx="345.5" cy="303.5" r="2"/>
<circle cx="345.5" cy="305.5" r="2"/>
<circle cx="345.5" cy="306.5" r="2"/>
<circle cx="345.5" cy="308.5" r="2"/>
<circle cx="344.5" cy="309.5" r="2"/>
<circle cx="344.5" cy="310.5" r="2"/>
<circle cx="344.5" cy="312.5" r="2"/>
<circle cx="344.5" cy="313.5" r="2"/>
<circle cx="344.5" cy="315.5" r="2"/>
<circle cx="344.5" cy="316.5" r="2"/>
<circle cx="343.5" cy="317.5" r="2"/>
<circle cx="343.5" cy="319.5" r="2"/>
<circle cx="343.5" cy="320.5" r="2"/>
<circle cx="342.5" cy="322.5" r="2"/>
<circle cx="342.5" cy="323.5" r="2"/>
<circle cx="342.5" cy="324.5" r="2"/>
<circle cx="341.5" cy="326.5" r="2"/>
<circle cx="341.5" cy="327.5" r="2"/>
<circle cx="340.5" cy="328.5" r="2"/>
<circle cx="340.5" cy="330.5" r="2"/>
<circle cx="339.5" cy="331.5" r="2"/>
<circle cx="339.5" cy="333.5" r="2"/>
<circle cx="338.5" cy="334.5" r="2"/>
<circle cx="337.5" cy="335.5" r="2"/>
<circle cx="337.5" cy="337.5" r="2"/>
<circle cx="336.5" cy="338.5" r="2"/>
<circle cx="335.5" cy="340.5" r="2"/>
<circle cx="335.5" cy="341.5" r="2"/>
<circle cx="334.5" cy="342.5" r="2"/>
<circle cx="333.5" cy="344.5" r="2"/>
<circle cx="332.5" cy="345.5" r="2"/>
<circle cx="332.5" cy="347.5" r="2"/>
<circle cx="331.5" cy="348.5" r="2"/>
<circle cx="330.5" cy="349.5" r="2"/>
<circle cx="329.5" cy="351.5" r="2"/>
<circle cx="328.5" cy="264.5" r="2"/>
<circle cx="328.5" cy="264.5" r="2"/>
<circle cx="329.5" cy="265.5" r="2"/>
<circle cx="329.5" cy="267.5" r="2"/>
<circle cx="330.5" cy="268.5" r="2"/>
<circle cx="331.5" cy="270.5" r="2"/>
<circle cx="331.5" cy="271.5" r="2"/>
<circle cx="332.5" cy="272.5" r="2"/>
<circle cx="333.5" cy="274.5" r="2"/>
<circle cx="333.5" cy="275.5" r="2"/>
<circle cx="334.5" cy="277.5" r="2"/>
<circle cx="334.5" cy="278.5" r="2"/>
<circle cx="335.5" cy="279.5" r="2"/>
<circle cx="335.5" cy="281.5" r="2"/>
<circle cx="336.5" cy="282.5" r="2"/>
<circle cx="336.5" cy="284.5" r="2"/>
<circle cx="336.5" cy="285.5" r="2"/>
<circle cx="337.5" cy="286.5" r="2"/>
<circle cx="337.5" cy="288.5" r="2"/>
<circle cx="337.5" cy="289.5" r="2"/>
<circle cx="338.5" cy="291.5" r="2"/>
<circle cx="338.5" cy="292.5" r="2"/>
<circle cx="338.5" cy="293.5" r="2"/>
<circle cx="338.5" cy="295.5" r="2"/>
<circle cx="338.5" cy="296.5" r="2"/>
<circle cx="338.5" cy="297.5" r="2"/>
<circle cx="339.5" cy="299.5" r="2"/>
<circle cx="339.5" cy="300.5" r="2"/>
<circle cx="339.5" cy="302.5" r="2"/>
<circle cx="339.5" cy="303.5" r="2"/>
<circle cx="339.5" cy="304.5" r="2"/>
<circle cx="339.5" cy="306.5" r="2"/>
<circle cx="339.5" cy="307.5" r="2"/>
<circle cx="338.5" cy="309.5" r="2"/>
<circle cx="338.5" cy="310.5" r="2"/>
<circle cx="338.5" cy="311.5" r="2"/>
<circle cx="338.5" cy="313.5" r="2"/>
<circle cx="338.5" cy="314.5" r="2"/>
<circle cx="338.5" cy="316.5" r="2"/>
<circle cx="337.5" cy="317.5" r="2"/>
<circle cx="337.5" cy="318.5" r="2"/>
<circle cx="337.5" cy="320.5" r="2"/>
<circle cx="336.5" cy="321.5" r="2"/>
<circle cx="336.5" cy="323.5" r="2"/>
<circle cx="336.5" cy="324.5" r="2"/>
<circle cx="335.5" cy="325.5" r="2"/>
<circle cx="335.5" cy="327.5" r="2"/>
<circle cx="334.5" cy="328.5" r="2"/>
<circle cx="334.5" cy="330.5" r="2"/>
<circle cx="333.5" cy="331.5" r="2"/>
<circle cx="333.5" cy="332.5" r="2"/>
<circle cx="332.5" cy="334.5" r="2"/>
<circle cx="332.5" cy="335.5" r="2"/>
<circle cx="331.5" cy="337.5" r="2"/>
<circle cx="330.5" cy="338.5" r="2"/>
<circle cx="330.5" cy="339.5" r="2"/>
<circle cx="329.5" cy="341.5" r="2"/>
<circle cx="328.5" cy="342.5" r="2"/>
<circle cx="328.5" cy="272.5" r="2"/>
<circle cx="329.5" cy="273.5" r="2"/>
<circle cx="329.5" cy="274.5" r="2"/>
<circle cx="330.5" cy="276.5" r="2"/>
<circle cx="330.5" cy="277.5" r="2"/>
<circle cx="331.5" cy="279.5" r="2"/>
<circle cx="331.5" cy="280.5" r="2"/>
<circle cx="332.5" cy="281.5" r="2"/>
<circle cx="332.5" cy="283.5" r="2"/>
<circle cx="332.5" cy="284.5" r="2"/>
<circle cx="333.5" cy="286.5" r="2"/>
<circle cx="333.5" cy="287.5" r="2"/>
<circle cx="333.5" cy="288.5" r="2"/>
<circle cx="334.5" cy="290.5" r="2"/>
<circle cx="334.5" cy="291.5" r="2"/>
<circle cx="334.5" cy="293.5" r="2"/>
<circle cx="334.5" cy="294.5" r="2"/>
<circle cx="334.5" cy="295.5" r="2"/>
<circle cx="335.5" cy="297.5" r="2"/>
<circle cx="335.5" cy="298.5" r="2"/>
<circle cx="335.5" cy="300.5" r="2"/>
<circle cx="335.5" cy="301.5" r="2"/>
<circle cx="335.5" cy="302.5" r="2"/>
<circle cx="335.5" cy="304.5" r="2"/>
<circle cx="335.5" cy="305.5" r="2"/>
<circle cx="335.5" cy="307.5" r="2"/>
<circle cx="335.5" cy="308.5" r="2"/>
<circle cx="335.5" cy="309.5" r="2"/>
<circle cx="334.5" cy="311.5" r="2"/>
<circle cx="334.5" cy="312.5" r="2"/>
<circle cx="334.5" cy="314.5" r="2"/>
<circle cx="334.5" cy="315.5" r="2"/>
<circle cx="334.5" cy="316.5" r="2"/>
<circle cx="333.5" cy="318.5" r="2"/>
<circle cx="333.5" cy="319.5" r="2"/>
<circle cx="333.5" cy="320.5" r="2"/>
<circle cx="332.5" cy="322.5" r="2"/>
<circle cx="332.5" cy="323.5" r="2"/>
<circle cx="332.5" cy="325.5" r="2"/>
<circle cx="331.5" cy="326.5" r="2"/>
<circle cx="331.5" cy="327.5" r="2"/>
<circle cx="330.5" cy="329.5" r="2"/>
<circle cx="330.5" cy="330.5" r="2"/>
<circle cx="329.5" cy="332.5" r="2"/>
<circle cx="329.5" cy="333.5" r="2"/>
<circle cx="328.5" cy="334.5" r="2"/>
<circle cx="328.5" cy="278.5" r="2"/>
<circle cx="328.5" cy="279.5" r="2"/>
<circle cx="329.5" cy="281.5" r="2"/>
<circle cx="329.5" cy="282.5" r="2"/>
<circle cx="330.5" cy="284.5" r="2"/>
<circle cx="330.5" cy="285.5" r="2"/>
<circle cx="330.5" cy="286.5" r="2"/>
<circle cx="331.5" cy="288.5" r="2"/>
<circle cx="331.5" cy="289.5" r="2"/>
<circle cx="331.5" cy="291.5" r="2"/>
<circle cx="331.5" cy="292.5" r="2"/>
<circle cx="332.5" cy="293.5" r="2"/>
<circle cx="332.5" cy="295.5" r="2"/>
<circle cx="332.5" cy="296.5" r="2"/>
<circle cx="332.5" cy="298.5" r="2"/>
<circle cx="332.5" cy="299.5" r="2"/>
<circle cx="332.5" cy="300.5" r="2"/>
<circle cx="332.5" cy="302.5" r="2"/>
<circle cx="332.5" cy="303.5" r="2"/>
<circle cx="332.5" cy="305.5" r="2"/>
<circle cx="332.5" cy="306.5" r="2"/>
<circle cx="332.5" cy="307.5" r="2"/>
<circle cx="332.5" cy="309.5" r="2"/>
<circle cx="332.5" cy="310.5" r="2"/>
<circle cx="332.5" cy="312.5" r="2"/>
<circle cx="332.5" cy="313.5" r="2"/>
<circle cx="332.5" cy="314.5" r="2"/>
<circle cx="331.5" cy="316.5" r="2"/>
<circle cx="331.5" cy="317.5" r="2"/>
<circle cx="331.5" cy="318.5" r="2"/>
<circle cx="330.5" cy="320.5" r="2"/>
<circle cx="330.5" cy="321.5" r="2"/>
<circle cx="330.5" cy="323.5" r="2"/>
<circle cx="329.5" cy="324.5" r="2"/>
<circle cx="329.5" cy="325.5" r="2"/>
<circle cx="328.5" cy="327.5" r="2"/>
<circle cx="328.5" cy="283.5" r="2"/>
<circle cx="328.5" cy="283.5" r="2"/>
<circle cx="328.5" cy="284.5" r="2"/>
<circle cx="329.5" cy="286.5" r="2"/>
<circle cx="329.5" cy="287.5" r="2"/>
<circle cx="329.5" cy="289.5" r="2"/>
<circle cx="330.5" cy="290.5" r="2"/>
<circle cx="330.5" cy="291.5" r="2"/>
<circle cx="330.5" cy="293.5" r="2"/>
<circle cx="330.5" cy="294.5" r="2"/>
<circle cx="330.5" cy="296.5" r="2"/>
<circle cx="331.5" cy="297.5" r="2"/>
<circle cx="331.5" cy="298.5" r="2"/>
<circle cx="331.5" cy="300.5" r="2"/>
<circle cx="331.5" cy="301.5" r="2"/>
<circle cx="331.5" cy="303.5" r="2"/>
<circle cx="331.5" cy="304.5" r="2"/>
<circle cx="331.5" cy="305.5" r="2"/>
<circle cx="331.5" cy="307.5" r="2"/>
<circle cx="331.5" cy="308.5" r="2"/>
<circle cx="331.5" cy="310.5" r="2"/>
<circle cx="330.5" cy="311.5" r="2"/>
<circle cx="330.5" cy="312.5" r="2"/>
<circle cx="330.5" cy="314.5" r="2"/>
<circle cx="330.5" cy="315.5" r="2"/>
<circle cx="330.5" cy="317.5" r="2"/>
<circle cx="329.5" cy="318.5" r="2"/>
<circle cx="329.5" cy="319.5" r="2"/>
<circle cx="329.5" cy="321.5" r="2"/>
<circle cx="328.5" cy="322.5" r="2"/>
<circle cx="328.5" cy="287.5" r="2"/>
<circle cx="328.5" cy="287.5" r="2"/>
<circle cx="328.5" cy="289.5" r="2"/>
<circle cx="329.5" cy="290.5" r="2"/>
<circle cx="329.5" cy="292.5" r="2"/>
<circle cx="329.5" cy="293.5" r="2"/>
<circle cx="329.5" cy="294.5" r="2"/>
<circle cx="329.5" cy="296.5" r="2"/>
<circle cx="330.5" cy="297.5" r="2"/>
<circle cx="330.5" cy="299.5" r="2"/>
<circle cx="330.5" cy="300.5" r="2"/>
<circle cx="330.5" cy="301.5" r="2"/>
<circle cx="330.5" cy="303.5" r="2"/>
<circle cx="330.5" cy="304.5" r="2"/>
<circle cx="330.5" cy="306.5" r="2"/>
<circle cx="330.5" cy="307.5" r="2"/>
<circle cx="330.5" cy="308.5" r="2"/>
<circle cx="329.5" cy="310.5" r="2"/>
<circle cx="329.5" cy="311.5" r="2"/>
<circle cx="329.5" cy="313.5" r="2"/>
<circle cx="329.5" cy="314.5" r="2"/>
<circle cx="329.5" cy="315.5" r="2"/>
<circle cx="329.5" cy="317.5" r="2"/>
<circle cx="328.5" cy="318.5" r="2"/>
<circle cx="328.5" cy="290.5" r="2"/>
<circle cx="328.5" cy="291.5" r="2"/>
<circle cx="328.5" cy="292.5" r="2"/>
<circle cx="328.5" cy="293.5" r="2"/>
<circle cx="329.5" cy="295.5" r="2"/>
<circle cx="329.5" cy="296.5" r="2"/>
<circle cx="329.5" cy="298.5" r="2"/>
<circle cx="329.5" cy="299.5" r="2"/>
<circle cx="329.5" cy="300.5" r="2"/>
<circle cx="329.5" cy="302.5" r="2"/>
<circle cx="329.5" cy="303.5" r="2"/>
<circle cx="329.5" cy="305.5" r="2"/>
<circle cx="329.5" cy="306.5" r="2"/>
<circle cx="329.5" cy="307.5" r="2"/>
<circle cx="329.5" cy="309.5" r="2"/>
<circle cx="329.5" cy="310.5" r="2"/>
<circle cx="329.5" cy="312.5" r="2"/>
<circle cx="328.5" cy="313.5" r="2"/>
<circle cx="328.5" cy="314.5" r="2"/>
<circle cx="328.5" cy="316.5" r="2"/>
<circle cx="328.5" cy="293.5" r="2"/>
<circle cx="328.5" cy="294.5" r="2"/>
<circle cx="328.5" cy="295.5" r="2"/>
<circle cx="328.5" cy="297.5" r="2"/>
<circle cx="329.5" cy="298.5" r="2"/>
<circle cx="329.5" cy="300.5" r="2"/>
<circle cx="329.5" cy="301.5" r="2"/>
<circle cx="329.5" cy="302.5" r="2"/>
<circle cx="329.5" cy="304.5" r="2"/>
<circle cx="329.5" cy="305.5" r="2"/>
<circle cx="329.5" cy="307.5" r="2"/>
<circle cx="329.5" cy="308.5" r="2"/>
<circle cx="328.5" cy="309.5" r="2"/>
<circle cx="328.5" cy="311.5" r="2"/>
<circle cx="328.5" cy="312.5" r="2"/>
<circle cx="328.5" cy="295.5" r="2"/>
<circle cx="328.5" cy="295.5" r="2"/>
<circle cx="328.5" cy="297.5" r="2"/>
<circle cx="328.5" cy="298.5" r="2"/>
<circle cx="328.5" cy="299.5" r="2"/>
<circle cx="328.5" cy="301.5" r="2"/>
<circle cx="328.5" cy="302.5" r="2"/>
<circle cx="328.5" cy="303.5" r="2"/>
<circle cx="328.5" cy="305.5" r="2"/>
<circle cx="328.5" cy="306.5" r="2"/>
<circle cx="328.5" cy="308.5" r="2"/>
<circle cx="328.5" cy="309.5" r="2"/>
<circle cx="328.5" cy="310.5" r="2"/>
<circle cx="328.5" cy="297.5" r="2"/>
<circle cx="328.5" cy="297.5" r="2"/>
<circle cx="328.5" cy="298.5" r="2"/>
<circle cx="328.5" cy="300.5" r="2"/>
<circle cx="328.5" cy="301.5" r="2"/>
<circle cx="328.5" cy="303.5" r="2"/>
<circle cx="328.5" cy="304.5" r="2"/>
<circle cx="328.5" cy="305.5" r="2"/>
<circle cx="328.5" cy="307.5" r="2"/>
<circle cx="328.5" cy="308.5" r="2"/>
<circle cx="328.5" cy="310.5" r="2"/>
<circle cx="328.5" cy="298.5" r="2"/>
<circle cx="328.5" cy="299.5" r="2"/>
<circle cx="328.5" cy="301.5" r="2"/>
<circle cx="328.5" cy="302.5" r="2"/>
<circle cx="328.5" cy="303.5" r="2"/>
<circle cx="328.5" cy="305.5" r="2"/>
<circle cx="328.5" cy="306.5" r="2"/>
<circle cx="328.5" cy="308.5" r="2"/>
<circle cx="328.5" cy="299.5" r="2"/>
<circle cx="328.5" cy="299.5" r="2"/>
<circle cx="328.5" cy="301.5" r="2"/>
<circle cx="328.5" cy="302.5" r="2"/>
<circle cx="328.5" cy="304.5" r="2"/>
<circle cx="328.5" cy="305.5" r="2"/>
<circle cx="328.5" cy="306.5" r="2"/>
<circle cx="328.5" cy="300.5" r="2"/>
<circle cx="328.5" cy="300.5" r="2"/>
<circle cx="328.5" cy="302.5" r="2"/>
<circle cx="328.5" cy="303.5" r="2"/>
<circle cx="328.5" cy="304.5" r="2"/>
<circle cx="328.5" cy="306.5" r="2"/>
<circle cx="328.5" cy="300.5" r="2"/>
<circle cx="328.5" cy="301.5" r="2"/>
<circle cx="328.5" cy="303.5" r="2"/>
<circle cx="328.5" cy="304.5" r="2"/>
<circle cx="328.5" cy="305.5" r="2"/>
<circle cx="328.5" cy="301.5" r="2"/>
<circle cx="328.5" cy="302.5" r="2"/>
<circle cx="328.5" cy="303.5" r="2"/>
<circle cx="328.5" cy="305.5" r="2"/>
<circle cx="328.5" cy="301.5" r="2"/>
<circle cx="328.5" cy="302.5" r="2"/>
<circle cx="328.5" cy="304.5" r="2"/>
<circle cx="328.5" cy="302.5" r="2"/>
<circle cx="328.5" cy="302.5" r="2"/>
<circle cx="328.5" cy="303.5" r="2"/>
</g>
</svg>
<!-- LEFT STRIP -->
<div id="strip" class="abs"></div><div id="stripb" class="abs"></div>
<div class="abs sep" style="top:90px"></div><div class="abs sep" style="top:136px"></div><div class="abs sep" style="top:182px"></div><div class="abs sep" style="top:227px"></div><div class="abs sep" style="top:273px"></div><div class="abs sep" style="top:318px"></div><div class="abs sep" style="top:364px"></div>
<svg width="36" height="420" viewBox="0 0 36 420" fill="#555">
<!-- plus -->
<path d="M14 57h7v8h8v7h-8v8h-7v-8H6v-7h8z"/>
<!-- folder -->
<path d="M8 104h7.5l2.5 3h9.5a2 2 0 0 1 2 2v12a2 2 0 0 1-2 2H8a2 2 0 0 1-2-2v-15a2 2 0 0 1 2-2z"/>
<!-- save -->
<path d="M9.300 148.500h16.400a2.500 2.500 0 0 1 2.500 2.500v16.500a2.500 2.500 0 0 1-2.500 2.500H9.800l-3-3V151a2.500 2.500 0 0 1 2.500-2.500zM9.900 151.300v7.100h15.500v-7.100zM12 162v5.500h11.300V162zM13.400 163.200h2.400v3.400h-2.400z" fill-rule="evenodd"/>
<!-- download -->
<g fill="none" stroke="#555" stroke-width="2.400" stroke-linecap="round" stroke-linejoin="round"><path d="M18.400 194.600V210.500M11.800 204.600l6.600 6.600 6.600-6.600"/><path d="M7.600 211.200v4a2 2 0 0 0 2 2h18a2 2 0 0 0 2-2v-4" stroke-linecap="butt"/></g>
<!-- share -->
<path d="M7.100 254.200v5a2 2 0 0 0 2 2h18.800a2 2 0 0 0 2-2v-5" fill="none" stroke="#555" stroke-width="2.400"/>
<path d="M22.600 241l6.900 6.600-6.500 6v-3.800c-5.500-.2-9 1.700-11.700 5.700.7-7 4.700-10.500 11.300-10.900z"/>
<!-- doc -->
<path d="M10.300 284h8.700l8.100 8.100v13.800a2.500 2.500 0 0 1-2.500 2.500H10.300a2.500 2.500 0 0 1-2.500-2.500v-19.400a2.500 2.500 0 0 1 2.500-2.500z"/>
<path d="M19.300 285.200v6.600h6.600zM12.400 295.600h10.200v2.900H12.400zM12.400 301.300h10.200v2.800H12.400z" fill="#e6e6e6"/>
<!-- gear -->
<g transform="translate(17.600 341.900)"><path id="gearp" fill-rule="evenodd" d="M3.30 8.16L2.95 11.84A12.20 12.20 0 0 1 -2.95 11.84L-3.30 8.16A8.80 8.80 0 0 1 -5.42 6.93L-8.78 8.47A12.20 12.20 0 0 1 -11.73 3.36L-8.71 1.22A8.80 8.80 0 0 1 -8.71 -1.22L-11.73 -3.36A12.20 12.20 0 0 1 -8.78 -8.47L-5.42 -6.93A8.80 8.80 0 0 1 -3.30 -8.16L-2.95 -11.84A12.20 12.20 0 0 1 2.95 -11.84L3.30 -8.16A8.80 8.80 0 0 1 5.42 -6.93L8.78 -8.47A12.20 12.20 0 0 1 11.73 -3.36L8.71 -1.22A8.80 8.80 0 0 1 8.71 1.22L11.73 3.36A12.20 12.20 0 0 1 8.78 8.47L5.42 6.93A8.80 8.80 0 0 1 3.30 8.16ZM4.50 0A4.50 4.50 0 1 0 -4.50 0A4.50 4.50 0 1 0 4.50 0Z"/></g>
<!-- help -->
<circle cx="17.800" cy="387.300" r="11.100" fill="none" stroke="#555" stroke-width="2"/>
<text x="17.700" y="394.100" text-anchor="middle" font-family="Liberation Sans, Arial, sans-serif" font-weight="bold" font-size="17.500" fill="#555">?</text>
</svg>
<!-- SIGNAL PANEL -->
<div id="panel" class="abs"></div><div id="panelb" class="abs"></div><div id="gap" class="abs"></div>
<svg width="270" height="50" viewBox="0 0 270 50">
<circle cx="87.700" cy="13.600" r="6.100" fill="none" stroke="#1171be" stroke-width="2"/>
<path d="M92.200 18.400l4.400 4.400" stroke="#1171be" stroke-width="2.400" stroke-linecap="round"/>
<path d="M198.440 13.930A7.600 7.600 0 1 1 194.900 9.320" fill="none" stroke="#12ad4e" stroke-width="1.900" stroke-linecap="round"/>
<path d="M186.600 16.200l3.300 3 8.700-10" fill="none" stroke="#12ad4e" stroke-width="2" stroke-linecap="round" stroke-linejoin="round"/>
<path d="M254.600 5.200l-3.300 3 3.300 3" fill="none" stroke="#888" stroke-width="1"/>
<rect x="59" y="45.700" width="56" height="2.200" fill="#6a6a6a"/>
</svg>
<div class="abs tab" style="left:48px;font-weight:bold">Inspect</div>
<div class="abs tab" style="left:150px">Compare</div>
<div id="filter" class="abs">Filter Signals</div>
<div id="thead" class="abs"><span class="abs" style="left:18px">NAME</span><span class="abs" style="left:175px">LINE</span>
<div class="abs vline" style="left:16px;top:0;height:15px;background:#c4c4c4"></div><div class="abs vline" style="left:173px;top:0;height:15px;background:#c4c4c4"></div></div>
<div id="run" class="abs"><span class="abs" style="left:15px">Run 1: ex_sldemo_bounce[Current]</span>
<div class="abs tri" style="left:6px;top:7px;border-top-color:#222;border-left-width:3px;border-right-width:3px;border-top-width:3.500px"></div>
<div class="abs" style="left:192px;top:3px;width:11.400px;height:11.400px;border-radius:6px;background:#10b04c"></div>
<div class="abs" style="left:211.200px;top:2.200px;width:3.400px;height:3.400px;border-radius:2px;background:#aca6a6;box-shadow:0 4.600px 0 #aca6a6,0 9.200px 0 #aca6a6"></div></div>
<div class="abs row" style="top:102px"><div class="abs cb" style="left:2px;top:3px"></div><span class="abs" style="left:31px">Position</span><div class="abs" style="left:182px;top:7px;width:38px;height:3px;background:#0072bd"></div></div>
<div class="abs row" style="top:122px"><div class="abs cb" style="left:2px;top:3px"></div><span class="abs" style="left:31px">Velocity</span><div class="abs" style="left:182px;top:7px;width:38px;height:3px;background:#d95319"></div></div>
<div class="abs vline" style="left:52px;top:102px;height:40px"></div><div class="abs vline" style="left:209px;top:102px;height:40px"></div>
<div class="abs" style="left:36px;top:142px;width:224px;height:1px;background:#d6d6d6"></div>
<svg width="270" height="145" viewBox="0 0 270 145"><path d="M40.500 110.500l2.500 3 5-7M40.500 130.500l2.500 3 5-7" fill="none" stroke="#111" stroke-width="1.500"/></svg>
<div class="abs" style="left:36px;top:594px;width:224px;height:44px;background:#fff"></div>
<div class="abs" style="left:36px;top:594px;width:224px;height:1px;background:#7c7c7c"></div>
<div class="abs" style="left:36px;top:615px;width:224px;height:1px;background:#dadada"></div>
<div class="abs" style="left:36px;top:618px;width:224px;height:1px;background:#6e6e6e"></div>
<div id="archive" class="abs" style="top:599.500px">Archive</div>
<div id="props" class="abs" style="top:623.500px">Properties</div>
<svg width="270" height="638" viewBox="0 0 270 638">
<path d="M210.400 599.500h8.300M213 598.300h3" stroke="#b8b8b8" stroke-width="1.300"/><path d="M211.200 601h6.700l-.3 7.800h-6.100z" fill="#b8b8b8"/>
<g transform="translate(233 604.200) scale(.34)"><use href="#gearp" fill="#b4b4b4"/></g>
<path d="M247 605.500l3.500-3.700 3.500 3.700M247 630.300l3.500-3.700 3.500 3.700" fill="none" stroke="#999" stroke-width="1.100"/>
</svg>
<!-- TOOLBAR -->
<svg width="958" height="32" viewBox="0 0 958 32">
<!-- hand (disabled) -->
<g fill="#d6d6d6"><rect x="562" y="9.300" width="2.300" height="8" rx="1.150"/><rect x="564.600" y="7" width="2.300" height="10" rx="1.150"/><rect x="567.200" y="6.300" width="2.300" height="10" rx="1.150"/><rect x="569.800" y="8" width="2.300" height="9" rx="1.150"/>
<path d="M562 14h10.100v-1a1.100 1.100 0 0 1 1.100-1.100 1.100 1.100 0 0 1 1.100 1.100v4c0 1.500-.8 2.500-1.800 3.300-1 1.100-2.500 1.600-4.500 1.600-3.500 0-6-2-6-5.500z"/></g>
<!-- play circle -->
<path d="M595.400 21.290A7.500 7.500 0 1 0 589.800 20.040" fill="none" stroke="#a6a6a6" stroke-width="1.300"/>
<path d="M592.200 21.700L588.300 21.700 591.200 18.100z" fill="#a6a6a6"/>
<path d="M592.100 10.300l6.100 3.450-6.100 3.450z" fill="#a6a6a6"/>
<!-- seps -->
<g fill="#8c8c8c"><rect x="613" y="5" width="1.100" height="20"/><rect x="676" y="5" width="1.100" height="20"/><rect x="720" y="5" width="1.100" height="20"/><rect x="830.700" y="5" width="1.600" height="20" fill="#cdcdcd"/><rect x="899.200" y="5" width="1.600" height="20" fill="#cdcdcd"/></g>
<!-- grid -->
<g fill="#a0a0a0"><rect x="625.200" y="6.400" width="5.900" height="5.900" rx="1"/><rect x="633.400" y="6.400" width="5.900" height="5.900" rx="1"/><rect x="625.200" y="14.800" width="5.900" height="5.900" rx="1"/><rect x="633.400" y="14.800" width="5.900" height="5.900" rx="1"/></g>
<!-- eraser -->
<g transform="translate(658 12.900) rotate(-42)"><rect x="-6.700" y="-2.500" width="13.400" height="5" rx=".6" fill="#fff" stroke="#a0a0a0" stroke-width=".9"/><rect x="-1.300" y="-2.900" width="8.400" height="5.800" rx=".6" fill="#a0a0a0"/></g>
<!-- wave -->
<path d="M687.100 12.900C688 7 689.500 5.400 690.400 5.400 692.500 5.400 693.500 11 694.200 13 695.500 17 696.500 20 698 20 699.500 20 700.500 17 701.300 12.900" fill="none" stroke="#989898" stroke-width="1.300" stroke-linecap="round"/>
<path d="M706.600 10.400h5.300l-2.650 3z" fill="#a0a0a0"/>
<!-- zoom -->
<circle cx="737.200" cy="11.300" r="4.400" fill="none" stroke="#999" stroke-width="1.300"/><path d="M740.600 15.200l4.700 4.100" stroke="#999" stroke-width="1.800" stroke-linecap="round"/><path d="M735.400 11.300h3.600M737.200 9.500v3.600" stroke="#999" stroke-width="1"/>
<path d="M750 10.400h5.300l-2.650 3z" fill="#a0a0a0"/>
<!-- fit -->
<rect x="764.900" y="7.200" width="16.300" height="12.600" rx="1.500" fill="none" stroke="#a4a4a4" stroke-width="1.500"/>
<path d="M772 10h2l-1-1.200zM772 17h2l-1 1.200zM768 12.400v2l-1.200-1zM778.400 12.400v2l1.200-1z" fill="#a4a4a4"/>
<path d="M787.300 10.300h5.300l-2.650 3z" fill="#a0a0a0"/>
<!-- cursor -->
<path d="M807.200 7.100v12.500l3.200-2.800 2 4.300 2-.9-2-4.200 4.300-.3z" fill="#555"/>
<rect x="801.100" y="22.100" width="19" height="1.700" fill="#4a4a4a"/>
<!-- expand (disabled) -->
<g stroke="#d6d6d6" stroke-width="1.300" fill="none"><path d="M852.300 12.700l5-5M852.800 7.700h4.500v4.500M849.300 16l-5 5M844.300 16.500v4.500h4.500"/></g>
<!-- fullscreen -->
<g stroke="#999" stroke-width="1.400" fill="none"><path d="M879.500 13.400v-3.700h3.700M885.700 9.700h3.700v3.700M889.400 15.600v3.700h-3.700M883.200 19.300h-3.700v-3.700"/></g>
<!-- camera -->
<path d="M913.400 9h2.400l1.300-2h4l1.300 2h2.100a1.400 1.400 0 0 1 1.400 1.400v8.100a1.400 1.400 0 0 1-1.400 1.400h-11.100a1.400 1.400 0 0 1-1.400-1.400v-8.100a1.400 1.400 0 0 1 1.400-1.400z" fill="#a0a0a0"/><circle cx="918.700" cy="14.300" r="3.700" fill="#fafafa"/><circle cx="918.700" cy="14.300" r="1.900" fill="#a0a0a0"/>
<!-- gear -->
<g transform="translate(944.300 14.400) scale(.615)"><use href="#gearp" fill="#4a4a4a"/></g>
<path d="M934 30.700l10.700-9.100 10.700 9.100z" fill="#808080"/>
</svg>
<!-- POPUP -->
<div id="pop" class="abs"></div>
<div class="abs" style="left:750px;top:31px;width:1px;height:370px;background:#c8c8c8"></div>
<svg width="958" height="420" viewBox="0 0 958 420">
<rect x="696" y="39.500" width="45.500" height="45.500" fill="#fff" stroke="#808080" stroke-width="1"/>
<path d="M699.600 82l39.800-39.800" stroke="#ef5a4c" stroke-width="1.100"/>
<g fill="#3a5fc0"><rect x="706.4" y="42.0" width="1.7" height="1.7"/><rect x="732.1" y="41.4" width="1.7" height="1.7"/><rect x="702.6" y="58.0" width="1.7" height="1.7"/><rect x="734.7" y="65.8" width="1.7" height="1.7"/><rect x="736.0" y="80.5" width="1.7" height="1.7"/><rect x="716.7" y="51.0" width="1.7" height="1.7"/><rect x="717.3" y="79.0" width="1.7" height="1.7"/><rect x="721.2" y="77.7" width="1.7" height="1.7"/><rect x="724.4" y="76.9" width="1.7" height="1.7"/><rect x="710.0" y="56.4" width="1.7" height="1.7"/><rect x="728.5" y="48.4" width="1.7" height="1.7"/><rect x="733.1" y="51.0" width="1.7" height="1.7"/><rect x="725.7" y="67.7" width="1.7" height="1.7"/><rect x="728.5" y="69.2" width="1.7" height="1.7"/><rect x="700.0" y="78.0" width="1.7" height="1.7"/><rect x="703.2" y="67.7" width="1.7" height="1.7"/><rect x="714.0" y="70.2" width="1.7" height="1.7"/><rect x="711.7" y="67.5" width="1.7" height="1.7"/><rect x="707.9" y="71.9" width="1.7" height="1.7"/><rect x="721.7" y="62.0" width="1.7" height="1.7"/><rect x="720.7" y="61.9" width="1.7" height="1.7"/><rect x="716.8" y="65.4" width="1.7" height="1.7"/><rect x="706.9" y="79.4" width="1.7" height="1.7"/><rect x="718.4" y="65.7" width="1.7" height="1.7"/><rect x="698.8" y="71.7" width="1.7" height="1.7"/><rect x="707.4" y="70.9" width="1.7" height="1.7"/><rect x="715.6" y="65.2" width="1.7" height="1.7"/><rect x="715.0" y="62.2" width="1.7" height="1.7"/><rect x="716.9" y="66.6" width="1.7" height="1.7"/><rect x="715.3" y="76.2" width="1.7" height="1.7"/><rect x="720.8" y="67.6" width="1.7" height="1.7"/><rect x="708.1" y="68.5" width="1.7" height="1.7"/><rect x="711.6" y="68.8" width="1.7" height="1.7"/><rect x="718.4" y="64.2" width="1.7" height="1.7"/><rect x="708.4" y="66.8" width="1.7" height="1.7"/><rect x="714.6" y="73.9" width="1.7" height="1.7"/><rect x="710.0" y="72.6" width="1.7" height="1.7"/><rect x="711.9" y="60.1" width="1.7" height="1.7"/><rect x="718.2" y="70.8" width="1.7" height="1.7"/><rect x="701.3" y="77.9" width="1.7" height="1.7"/><rect x="710.9" y="65.3" width="1.7" height="1.7"/><rect x="716.6" y="64.1" width="1.7" height="1.7"/><rect x="708.0" y="78.2" width="1.7" height="1.7"/><rect x="720.7" y="66.1" width="1.7" height="1.7"/><rect x="723.4" y="59.9" width="1.7" height="1.7"/><rect x="710.7" y="62.5" width="1.7" height="1.7"/><rect x="715.7" y="61.7" width="1.7" height="1.7"/><rect x="707.5" y="65.9" width="1.7" height="1.7"/><rect x="706.7" y="71.1" width="1.7" height="1.7"/><rect x="715.2" y="53.5" width="1.7" height="1.7"/><rect x="706.2" y="76.3" width="1.7" height="1.7"/><rect x="724.1" y="60.5" width="1.7" height="1.7"/><rect x="713.8" y="62.8" width="1.7" height="1.7"/><rect x="710.4" y="76.6" width="1.7" height="1.7"/><rect x="720.8" y="61.2" width="1.7" height="1.7"/><rect x="716.7" y="67.0" width="1.7" height="1.7"/><rect x="725.1" y="59.8" width="1.7" height="1.7"/><rect x="718.6" y="65.8" width="1.7" height="1.7"/><rect x="708.8" y="80.1" width="1.7" height="1.7"/><rect x="721.1" y="63.2" width="1.7" height="1.7"/><rect x="700.6" y="76.7" width="1.7" height="1.7"/><rect x="713.3" y="56.8" width="1.7" height="1.7"/><rect x="716.0" y="71.3" width="1.7" height="1.7"/><rect x="711.2" y="79.6" width="1.7" height="1.7"/><rect x="716.7" y="63.5" width="1.7" height="1.7"/><rect x="717.8" y="67.2" width="1.7" height="1.7"/><rect x="718.1" y="69.9" width="1.7" height="1.7"/><rect x="708.9" y="69.7" width="1.7" height="1.7"/><rect x="720.1" y="61.2" width="1.7" height="1.7"/><rect x="711.7" y="75.1" width="1.7" height="1.7"/><rect x="721.1" y="57.3" width="1.7" height="1.7"/><rect x="705.5" y="74.7" width="1.7" height="1.7"/><rect x="712.2" y="67.1" width="1.7" height="1.7"/><rect x="719.0" y="55.9" width="1.7" height="1.7"/><rect x="717.4" y="56.0" width="1.7" height="1.7"/><rect x="711.3" y="73.6" width="1.7" height="1.7"/><rect x="723.1" y="63.2" width="1.7" height="1.7"/><rect x="716.4" y="65.6" width="1.7" height="1.7"/><rect x="716.6" y="68.0" width="1.7" height="1.7"/><rect x="713.8" y="69.0" width="1.7" height="1.7"/><rect x="717.3" y="63.8" width="1.7" height="1.7"/><rect x="720.1" y="64.4" width="1.7" height="1.7"/><rect x="726.6" y="56.5" width="1.7" height="1.7"/><rect x="710.3" y="68.5" width="1.7" height="1.7"/><rect x="716.7" y="70.0" width="1.7" height="1.7"/><rect x="713.2" y="70.3" width="1.7" height="1.7"/><rect x="716.8" y="48.7" width="1.7" height="1.7"/><rect x="708.2" y="74.4" width="1.7" height="1.7"/><rect x="717.0" y="65.6" width="1.7" height="1.7"/><rect x="713.4" y="71.6" width="1.7" height="1.7"/><rect x="714.0" y="63.9" width="1.7" height="1.7"/><rect x="729.1" y="54.1" width="1.7" height="1.7"/><rect x="710.4" y="70.1" width="1.7" height="1.7"/><rect x="712.5" y="68.3" width="1.7" height="1.7"/><rect x="696.7" y="81.5" width="1.7" height="1.7"/><rect x="716.2" y="57.8" width="1.7" height="1.7"/><rect x="716.5" y="70.4" width="1.7" height="1.7"/><rect x="723.4" y="66.7" width="1.7" height="1.7"/><rect x="703.0" y="75.9" width="1.7" height="1.7"/><rect x="713.9" y="71.0" width="1.7" height="1.7"/><rect x="712.1" y="52.7" width="1.7" height="1.7"/><rect x="715.9" y="56.4" width="1.7" height="1.7"/><rect x="713.4" y="58.7" width="1.7" height="1.7"/><rect x="718.6" y="69.8" width="1.7" height="1.7"/><rect x="713.7" y="68.6" width="1.7" height="1.7"/><rect x="719.0" y="63.0" width="1.7" height="1.7"/><rect x="718.1" y="72.3" width="1.7" height="1.7"/><rect x="719.1" y="60.2" width="1.7" height="1.7"/><rect x="726.4" y="47.7" width="1.7" height="1.7"/><rect x="718.4" y="61.0" width="1.7" height="1.7"/><rect x="716.9" y="68.5" width="1.7" height="1.7"/><rect x="717.2" y="67.8" width="1.7" height="1.7"/><rect x="700.5" y="71.4" width="1.7" height="1.7"/><rect x="714.6" y="60.7" width="1.7" height="1.7"/><rect x="703.5" y="68.6" width="1.7" height="1.7"/><rect x="723.6" y="62.1" width="1.7" height="1.7"/><rect x="719.6" y="55.8" width="1.7" height="1.7"/><rect x="710.5" y="63.7" width="1.7" height="1.7"/><rect x="723.2" y="67.5" width="1.7" height="1.7"/><rect x="713.5" y="77.1" width="1.7" height="1.7"/><rect x="719.1" y="60.9" width="1.7" height="1.7"/><rect x="711.6" y="65.9" width="1.7" height="1.7"/><rect x="717.5" y="66.1" width="1.7" height="1.7"/><rect x="719.5" y="55.4" width="1.7" height="1.7"/><rect x="725.1" y="65.1" width="1.7" height="1.7"/><rect x="721.8" y="58.2" width="1.7" height="1.7"/><rect x="712.7" y="74.6" width="1.7" height="1.7"/><rect x="715.0" y="66.9" width="1.7" height="1.7"/><rect x="721.4" y="58.1" width="1.7" height="1.7"/><rect x="699.5" y="79.3" width="1.7" height="1.7"/><rect x="705.7" y="80.4" width="1.7" height="1.7"/><rect x="713.9" y="63.5" width="1.7" height="1.7"/><rect x="716.4" y="69.7" width="1.7" height="1.7"/><rect x="718.4" y="70.7" width="1.7" height="1.7"/><rect x="716.8" y="70.7" width="1.7" height="1.7"/><rect x="727.5" y="63.4" width="1.7" height="1.7"/><rect x="712.7" y="73.7" width="1.7" height="1.7"/><rect x="699.8" y="74.7" width="1.7" height="1.7"/><rect x="705.8" y="81.8" width="1.7" height="1.7"/><rect x="706.8" y="74.3" width="1.7" height="1.7"/><rect x="712.7" y="68.2" width="1.7" height="1.7"/><rect x="711.2" y="71.3" width="1.7" height="1.7"/><rect x="724.5" y="56.9" width="1.7" height="1.7"/><rect x="720.1" y="67.1" width="1.7" height="1.7"/><rect x="709.0" y="64.5" width="1.7" height="1.7"/><rect x="714.0" y="73.6" width="1.7" height="1.7"/><rect x="702.6" y="74.9" width="1.7" height="1.7"/><rect x="722.2" y="63.7" width="1.7" height="1.7"/><rect x="716.4" y="69.6" width="1.7" height="1.7"/><rect x="711.3" y="62.6" width="1.7" height="1.7"/><rect x="702.9" y="74.3" width="1.7" height="1.7"/><rect x="717.6" y="60.1" width="1.7" height="1.7"/><rect x="706.4" y="70.0" width="1.7" height="1.7"/><rect x="704.7" y="75.7" width="1.7" height="1.7"/><rect x="708.2" y="75.1" width="1.7" height="1.7"/><rect x="701.3" y="81.8" width="1.7" height="1.7"/><rect x="704.3" y="65.0" width="1.7" height="1.7"/><rect x="717.3" y="62.1" width="1.7" height="1.7"/><rect x="698.4" y="77.4" width="1.7" height="1.7"/><rect x="714.2" y="64.1" width="1.7" height="1.7"/><rect x="720.7" y="64.9" width="1.7" height="1.7"/><rect x="718.8" y="64.3" width="1.7" height="1.7"/><rect x="723.7" y="61.4" width="1.7" height="1.7"/><rect x="710.2" y="58.2" width="1.7" height="1.7"/><rect x="723.1" y="65.9" width="1.7" height="1.7"/><rect x="710.8" y="67.4" width="1.7" height="1.7"/><rect x="719.9" y="50.6" width="1.7" height="1.7"/><rect x="724.0" y="71.8" width="1.7" height="1.7"/><rect x="710.7" y="74.6" width="1.7" height="1.7"/><rect x="724.5" y="55.8" width="1.7" height="1.7"/><rect x="719.9" y="66.6" width="1.7" height="1.7"/><rect x="708.4" y="72.1" width="1.7" height="1.7"/><rect x="718.2" y="68.0" width="1.7" height="1.7"/><rect x="713.2" y="66.8" width="1.7" height="1.7"/><rect x="707.0" y="71.9" width="1.7" height="1.7"/><rect x="719.4" y="62.3" width="1.7" height="1.7"/><rect x="706.4" y="69.5" width="1.7" height="1.7"/><rect x="732.9" y="55.2" width="1.7" height="1.7"/><rect x="709.8" y="55.6" width="1.7" height="1.7"/><rect x="719.0" y="65.0" width="1.7" height="1.7"/><rect x="725.0" y="58.7" width="1.7" height="1.7"/><rect x="715.1" y="69.1" width="1.7" height="1.7"/><rect x="705.8" y="81.6" width="1.7" height="1.7"/><rect x="713.7" y="63.1" width="1.7" height="1.7"/></g>
<rect x="695.500" y="105" width="46.500" height="2" fill="#555"/>
<path d="M758.500 43h5l-2.500 3.500zM758.500 137h5l-2.500 3.500z" fill="#444"/>
<path d="M759.500 315.500v5l3-2.500zM759.500 348.500v5l3-2.500z" fill="#444"/>
<path d="M763.600 382.400a4 4 0 1 1-3.300 6" fill="none" stroke="#2f7fd8" stroke-width="3.200"/><path d="M758.900 382.600l4.900-3.400v6.600z" fill="#a8d0f8" stroke="#2f7fd8" stroke-width=".9" stroke-linejoin="round"/><path d="M763.300 382.400a4 4 0 1 1-3 6" fill="none" stroke="#b4d8fa" stroke-width="1.500"/><circle cx="764.300" cy="386.400" r="1.100" fill="#fff" stroke="#2f7fd8" stroke-width=".9"/>
</svg>
<div class="abs" style="left:696px;top:88px;width:46px;text-align:center;font-size:9.500px;font-weight:bold;color:#222;left:695.500px">XY</div>
<div class="abs hd" style="top:39px;left:767px;font-weight:bold">Style</div>
<div class="abs lbl" style="top:56px">Plot color</div><div class="abs sw" style="top:55px;background:#fff"></div>
<div class="abs lbl" style="top:77.500px">Grid color</div><div class="abs sw" style="top:77px;background:#d3d3d3"></div>
<div class="abs lbl" style="top:99px">Font color</div><div class="abs sw" style="top:98px;background:#000"></div>
<div class="abs hline" style="top:122px"></div>
<div class="abs hd" style="top:132.700px"><b>Axes</b> <i>(Applies to all XYs)</i></div>
<div class="abs lbl" style="top:149px">Line</div><div class="abs cb" style="left:865px;top:149px;border-color:#666"></div>
<div class="abs lbl" style="top:169.500px;color:#b8b8b8">Color</div><div class="abs sel" style="top:168px;color:#b8b8b8;border-color:#cfcfcf;background:#fcfcfc">y-Axis<div class="abs tri2" style="left:74px;top:4.500px;border-top-color:#c0c0c0"></div></div>
<div class="abs lbl" style="top:190px">Markers</div><div class="abs cb" style="left:865px;top:191px;border-color:#444"></div>
<div class="abs lbl" style="top:212px">Fill</div><div class="abs sel" style="top:211px">y-Axis<div class="abs tri2" style="left:74px;top:4.500px"></div></div>
<div class="abs lbl" style="top:234px">Border</div><div class="abs sel" style="top:233px">x-Axis<div class="abs tri2" style="left:74px;top:4.500px"></div></div>
<div class="abs lbl" style="top:257px">Size (px)</div><div class="abs sel" style="top:255px;border-radius:0;background:#fff;text-align:right;padding-right:3px;height:14px;line-height:12px">3</div>
<div class="abs lbl" style="top:279px">Grid</div><div class="abs sel" style="top:278px">On<div class="abs tri2" style="left:74px;top:4.500px"></div></div>
<div class="abs hline" style="top:302px"></div>
<div class="abs hd" style="top:312px"><b>Trend Line</b> <i>(Applies to all XYs)</i></div>
<div class="abs hline" style="top:335px"></div>
<div class="abs hd" style="top:345.600px;font-weight:bold">Limits</div>
<div class="abs hline" style="top:367px"></div>
<div class="abs lbl" style="left:773px;top:381.500px">Restore Defaults</div>
<svg width="958" height="420" viewBox="0 0 958 420"><path d="M867 196.500l2.500 3 4.500-6.500" fill="none" stroke="#111" stroke-width="1.600"/></svg>

</body></html>
